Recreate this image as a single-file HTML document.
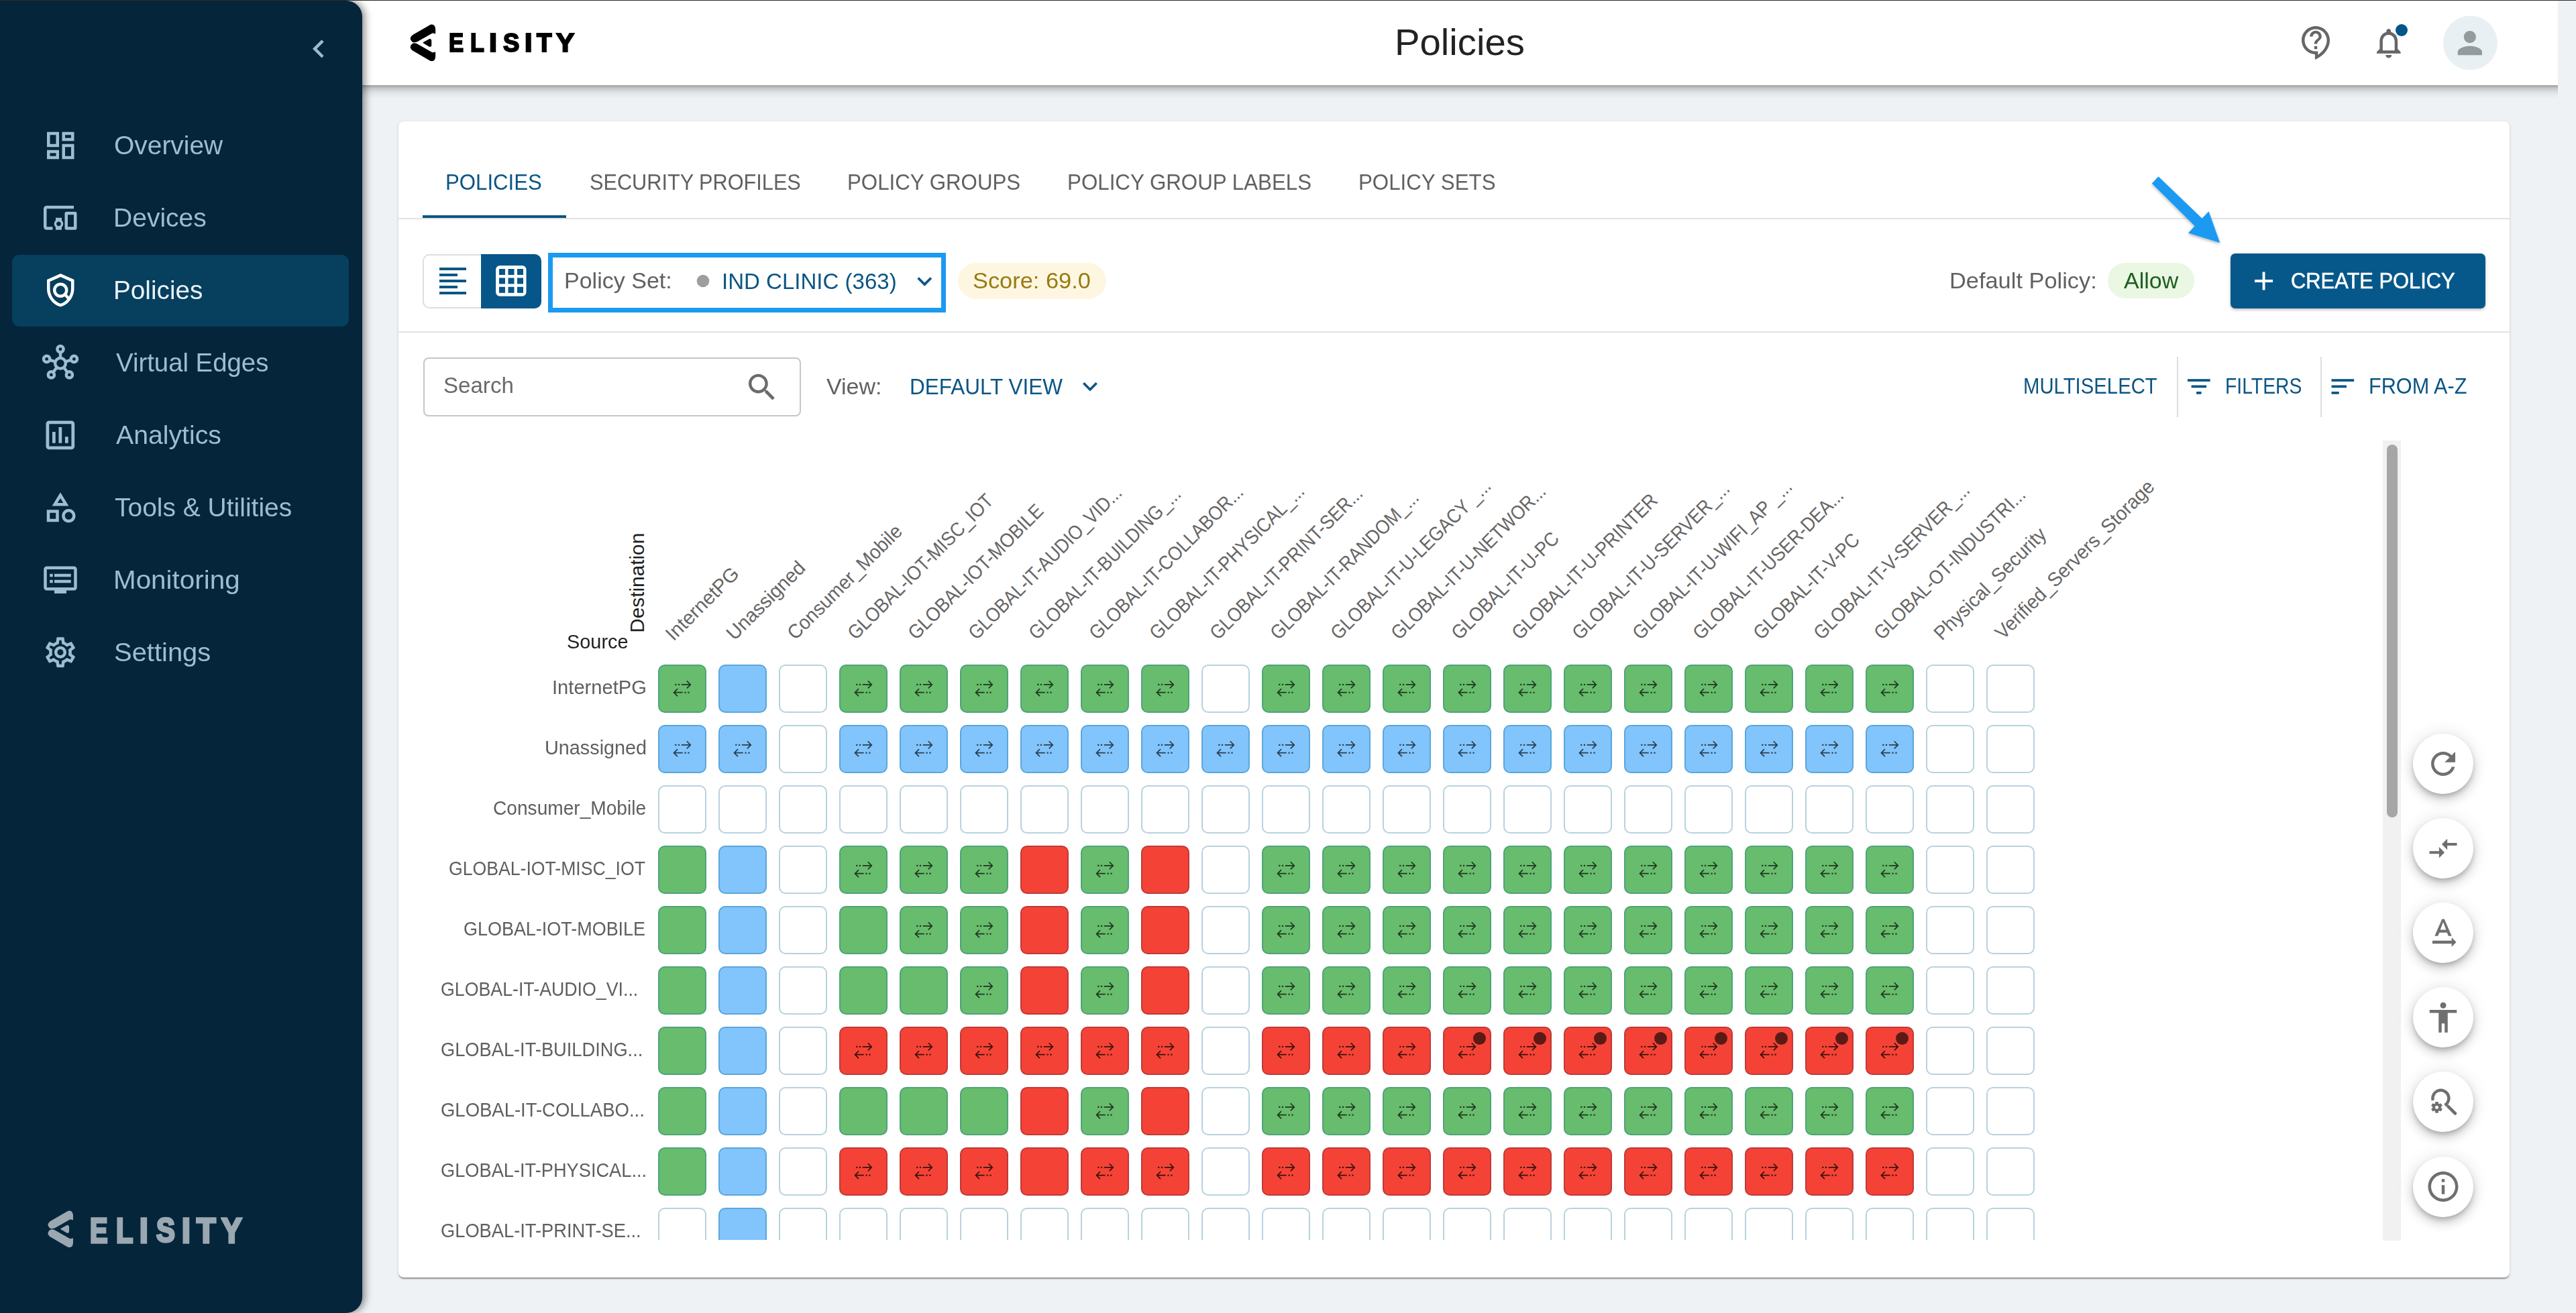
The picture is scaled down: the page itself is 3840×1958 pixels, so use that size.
<!DOCTYPE html>
<html><head><meta charset="utf-8"><title>Policies</title>
<style>
html,body{margin:0;padding:0;width:3840px;height:1958px;overflow:hidden;background:#eef2f5;font-family:"Liberation Sans",sans-serif;}
.a{position:absolute;box-sizing:border-box;}
.t{position:absolute;z-index:30;white-space:nowrap;transform-origin:0 0;font-family:"Liberation Sans",sans-serif;}
#topline{position:absolute;left:0;top:0;width:3840px;height:1px;background:#2a2a2a;z-index:50}
#sidebar{position:absolute;left:0;top:1px;width:540px;height:1957px;background:#05253a;border-radius:0 24px 24px 0;box-shadow:4px 0 12px rgba(0,0,0,0.45);z-index:10}
#sidebar .act{position:absolute;left:18px;top:379px;width:502px;height:107px;background:#073f5e;border-radius:11px}
#header{position:absolute;left:0px;top:1px;width:3813px;height:126px;background:#fff;z-index:5}
#hshadow{position:absolute;left:0px;top:127px;width:3813px;height:20px;background:linear-gradient(rgba(0,0,0,0.34),rgba(0,0,0,0.16) 25%,rgba(0,0,0,0.05) 60%,rgba(0,0,0,0));z-index:5}
#card{position:absolute;left:594px;top:181px;width:3147px;height:1723.5px;background:#fff;border-radius:8px;box-shadow:0 3px 1.5px -1.5px rgba(0,0,0,.2),0 1.5px 1.5px 0 rgba(0,0,0,.14),0 1.5px 4.5px 0 rgba(0,0,0,.12)}
.hl{position:absolute;height:2px;background:#e0e0e0}
.c{position:absolute;width:72px;height:72px;box-sizing:border-box;border-radius:10px;border:2px solid}
.cg{background:#68bc6d;border-color:#4da47a;color:rgba(0,0,0,0.7)}
.cb{background:#82c4fc;border-color:#5aa7dc;color:rgba(0,0,0,0.68)}
.cr{background:#f44336;border-color:#c0393a;color:rgba(0,0,0,0.75)}
.ce{background:#fff;border-color:#b8d2de}
.ar{position:absolute;left:-2px;top:-2px}
.dot{position:absolute;right:6px;top:6px;width:19px;height:19px;border-radius:50%;background:#5c1a17}
#matclip{position:absolute;left:600px;top:640px;width:2940px;height:1209px;overflow:hidden}
#matclip .inner{position:absolute;left:-600px;top:-640px;width:3840px;height:1958px}
.fab{position:absolute;width:90px;height:90px;border-radius:50%;background:#fff;box-shadow:0 4.5px 7.5px -1.5px rgba(0,0,0,.2),0 9px 15px 0 rgba(0,0,0,.14),0 1.5px 27px 0 rgba(0,0,0,.12)}
</style></head>
<body>
<div id="topline"></div>
<div id="sidebar"><div class="act"></div></div>
<div id="header"></div><div id="hshadow"></div>
<div id="card"></div>
<!-- card internals -->
<div class="hl" style="left:594px;top:325px;width:3147px;height:2px;background:#e2e2e2"></div>
<div class="a" style="left:630px;top:321px;width:214px;height:4px;background:#0b5584"></div>
<div class="hl" style="left:594px;top:494px;width:3147px;height:2px;background:#e2e2e2"></div>
<!-- toggle -->
<div class="a" style="left:630px;top:379px;width:100px;height:81px;border:2px solid #dedede;border-right:none;border-radius:10px 0 0 10px;background:#fff"></div>
<div class="a" style="left:717px;top:379px;width:90px;height:81px;background:#065689;border-radius:0 10px 10px 0"></div>
<!-- policy set annotation box -->
<div class="a" style="left:817px;top:377px;width:593px;height:88.5px;border:7.5px solid #1a9af1;background:#fff"></div>
<!-- pills -->
<div class="a" style="left:1428px;top:392px;width:221px;height:54px;border-radius:27px;background:#fdf7e2"></div>
<div class="a" style="left:3142px;top:392px;width:128.5px;height:53px;border-radius:27px;background:#e9f7e3"></div>
<!-- create button -->
<div class="a" style="left:3325px;top:378px;width:380px;height:82px;border-radius:7px;background:#07588a;box-shadow:0 2px 4px rgba(0,0,0,0.25)"></div>
<!-- search box -->
<div class="a" style="left:631px;top:533px;width:563px;height:88px;border:2px solid #c6c6c6;border-radius:8px"></div>
<!-- dividers -->
<div class="a" style="left:3245px;top:532px;width:2px;height:90px;background:#dddddd"></div>
<div class="a" style="left:3459px;top:532px;width:2px;height:90px;background:#dddddd"></div>
<!-- scrollbar -->
<div class="a" style="left:3552px;top:657px;width:27px;height:1193px;background:#f1f1f1"></div>
<div class="a" style="left:3558px;top:663px;width:16px;height:556px;background:#a6a6a6;border-radius:8px"></div>
<!-- FABs -->
<div class='fab' style='left:3597px;top:1094.0px'></div>
<div class='fab' style='left:3597px;top:1220.1px'></div>
<div class='fab' style='left:3597px;top:1346.2px'></div>
<div class='fab' style='left:3597px;top:1472.3px'></div>
<div class='fab' style='left:3597px;top:1598.4px'></div>
<div class='fab' style='left:3597px;top:1724.5px'></div>
<!-- matrix -->
<div id="matclip"><div class="inner">
<div class='c cg' style='left:981px;top:991px'><svg class=ar viewBox='0 0 72 72' width=72 height=72><g fill='none' stroke='currentColor' stroke-width='1.7'><path d='M34.8 29.9H48.3M42.8 24.4L48.3 29.9L42.8 35.4'/><path d='M23.5 41.7H36.7M29 36.2L23.5 41.7L29 47.2'/></g><g fill='currentColor'><rect x='25.2' y='28.8' width='2.2' height='2.2'/><rect x='29.9' y='28.8' width='2.2' height='2.2'/><rect x='39.5' y='40.6' width='2.2' height='2.2'/><rect x='44.4' y='40.6' width='2.2' height='2.2'/></g></svg></div>
<div class='c cb' style='left:1071px;top:991px'></div>
<div class='c ce' style='left:1161px;top:991px'></div>
<div class='c cg' style='left:1251px;top:991px'><svg class=ar viewBox='0 0 72 72' width=72 height=72><g fill='none' stroke='currentColor' stroke-width='1.7'><path d='M34.8 29.9H48.3M42.8 24.4L48.3 29.9L42.8 35.4'/><path d='M23.5 41.7H36.7M29 36.2L23.5 41.7L29 47.2'/></g><g fill='currentColor'><rect x='25.2' y='28.8' width='2.2' height='2.2'/><rect x='29.9' y='28.8' width='2.2' height='2.2'/><rect x='39.5' y='40.6' width='2.2' height='2.2'/><rect x='44.4' y='40.6' width='2.2' height='2.2'/></g></svg></div>
<div class='c cg' style='left:1341px;top:991px'><svg class=ar viewBox='0 0 72 72' width=72 height=72><g fill='none' stroke='currentColor' stroke-width='1.7'><path d='M34.8 29.9H48.3M42.8 24.4L48.3 29.9L42.8 35.4'/><path d='M23.5 41.7H36.7M29 36.2L23.5 41.7L29 47.2'/></g><g fill='currentColor'><rect x='25.2' y='28.8' width='2.2' height='2.2'/><rect x='29.9' y='28.8' width='2.2' height='2.2'/><rect x='39.5' y='40.6' width='2.2' height='2.2'/><rect x='44.4' y='40.6' width='2.2' height='2.2'/></g></svg></div>
<div class='c cg' style='left:1431px;top:991px'><svg class=ar viewBox='0 0 72 72' width=72 height=72><g fill='none' stroke='currentColor' stroke-width='1.7'><path d='M34.8 29.9H48.3M42.8 24.4L48.3 29.9L42.8 35.4'/><path d='M23.5 41.7H36.7M29 36.2L23.5 41.7L29 47.2'/></g><g fill='currentColor'><rect x='25.2' y='28.8' width='2.2' height='2.2'/><rect x='29.9' y='28.8' width='2.2' height='2.2'/><rect x='39.5' y='40.6' width='2.2' height='2.2'/><rect x='44.4' y='40.6' width='2.2' height='2.2'/></g></svg></div>
<div class='c cg' style='left:1521px;top:991px'><svg class=ar viewBox='0 0 72 72' width=72 height=72><g fill='none' stroke='currentColor' stroke-width='1.7'><path d='M34.8 29.9H48.3M42.8 24.4L48.3 29.9L42.8 35.4'/><path d='M23.5 41.7H36.7M29 36.2L23.5 41.7L29 47.2'/></g><g fill='currentColor'><rect x='25.2' y='28.8' width='2.2' height='2.2'/><rect x='29.9' y='28.8' width='2.2' height='2.2'/><rect x='39.5' y='40.6' width='2.2' height='2.2'/><rect x='44.4' y='40.6' width='2.2' height='2.2'/></g></svg></div>
<div class='c cg' style='left:1611px;top:991px'><svg class=ar viewBox='0 0 72 72' width=72 height=72><g fill='none' stroke='currentColor' stroke-width='1.7'><path d='M34.8 29.9H48.3M42.8 24.4L48.3 29.9L42.8 35.4'/><path d='M23.5 41.7H36.7M29 36.2L23.5 41.7L29 47.2'/></g><g fill='currentColor'><rect x='25.2' y='28.8' width='2.2' height='2.2'/><rect x='29.9' y='28.8' width='2.2' height='2.2'/><rect x='39.5' y='40.6' width='2.2' height='2.2'/><rect x='44.4' y='40.6' width='2.2' height='2.2'/></g></svg></div>
<div class='c cg' style='left:1701px;top:991px'><svg class=ar viewBox='0 0 72 72' width=72 height=72><g fill='none' stroke='currentColor' stroke-width='1.7'><path d='M34.8 29.9H48.3M42.8 24.4L48.3 29.9L42.8 35.4'/><path d='M23.5 41.7H36.7M29 36.2L23.5 41.7L29 47.2'/></g><g fill='currentColor'><rect x='25.2' y='28.8' width='2.2' height='2.2'/><rect x='29.9' y='28.8' width='2.2' height='2.2'/><rect x='39.5' y='40.6' width='2.2' height='2.2'/><rect x='44.4' y='40.6' width='2.2' height='2.2'/></g></svg></div>
<div class='c ce' style='left:1791px;top:991px'></div>
<div class='c cg' style='left:1881px;top:991px'><svg class=ar viewBox='0 0 72 72' width=72 height=72><g fill='none' stroke='currentColor' stroke-width='1.7'><path d='M34.8 29.9H48.3M42.8 24.4L48.3 29.9L42.8 35.4'/><path d='M23.5 41.7H36.7M29 36.2L23.5 41.7L29 47.2'/></g><g fill='currentColor'><rect x='25.2' y='28.8' width='2.2' height='2.2'/><rect x='29.9' y='28.8' width='2.2' height='2.2'/><rect x='39.5' y='40.6' width='2.2' height='2.2'/><rect x='44.4' y='40.6' width='2.2' height='2.2'/></g></svg></div>
<div class='c cg' style='left:1971px;top:991px'><svg class=ar viewBox='0 0 72 72' width=72 height=72><g fill='none' stroke='currentColor' stroke-width='1.7'><path d='M34.8 29.9H48.3M42.8 24.4L48.3 29.9L42.8 35.4'/><path d='M23.5 41.7H36.7M29 36.2L23.5 41.7L29 47.2'/></g><g fill='currentColor'><rect x='25.2' y='28.8' width='2.2' height='2.2'/><rect x='29.9' y='28.8' width='2.2' height='2.2'/><rect x='39.5' y='40.6' width='2.2' height='2.2'/><rect x='44.4' y='40.6' width='2.2' height='2.2'/></g></svg></div>
<div class='c cg' style='left:2061px;top:991px'><svg class=ar viewBox='0 0 72 72' width=72 height=72><g fill='none' stroke='currentColor' stroke-width='1.7'><path d='M34.8 29.9H48.3M42.8 24.4L48.3 29.9L42.8 35.4'/><path d='M23.5 41.7H36.7M29 36.2L23.5 41.7L29 47.2'/></g><g fill='currentColor'><rect x='25.2' y='28.8' width='2.2' height='2.2'/><rect x='29.9' y='28.8' width='2.2' height='2.2'/><rect x='39.5' y='40.6' width='2.2' height='2.2'/><rect x='44.4' y='40.6' width='2.2' height='2.2'/></g></svg></div>
<div class='c cg' style='left:2151px;top:991px'><svg class=ar viewBox='0 0 72 72' width=72 height=72><g fill='none' stroke='currentColor' stroke-width='1.7'><path d='M34.8 29.9H48.3M42.8 24.4L48.3 29.9L42.8 35.4'/><path d='M23.5 41.7H36.7M29 36.2L23.5 41.7L29 47.2'/></g><g fill='currentColor'><rect x='25.2' y='28.8' width='2.2' height='2.2'/><rect x='29.9' y='28.8' width='2.2' height='2.2'/><rect x='39.5' y='40.6' width='2.2' height='2.2'/><rect x='44.4' y='40.6' width='2.2' height='2.2'/></g></svg></div>
<div class='c cg' style='left:2241px;top:991px'><svg class=ar viewBox='0 0 72 72' width=72 height=72><g fill='none' stroke='currentColor' stroke-width='1.7'><path d='M34.8 29.9H48.3M42.8 24.4L48.3 29.9L42.8 35.4'/><path d='M23.5 41.7H36.7M29 36.2L23.5 41.7L29 47.2'/></g><g fill='currentColor'><rect x='25.2' y='28.8' width='2.2' height='2.2'/><rect x='29.9' y='28.8' width='2.2' height='2.2'/><rect x='39.5' y='40.6' width='2.2' height='2.2'/><rect x='44.4' y='40.6' width='2.2' height='2.2'/></g></svg></div>
<div class='c cg' style='left:2331px;top:991px'><svg class=ar viewBox='0 0 72 72' width=72 height=72><g fill='none' stroke='currentColor' stroke-width='1.7'><path d='M34.8 29.9H48.3M42.8 24.4L48.3 29.9L42.8 35.4'/><path d='M23.5 41.7H36.7M29 36.2L23.5 41.7L29 47.2'/></g><g fill='currentColor'><rect x='25.2' y='28.8' width='2.2' height='2.2'/><rect x='29.9' y='28.8' width='2.2' height='2.2'/><rect x='39.5' y='40.6' width='2.2' height='2.2'/><rect x='44.4' y='40.6' width='2.2' height='2.2'/></g></svg></div>
<div class='c cg' style='left:2421px;top:991px'><svg class=ar viewBox='0 0 72 72' width=72 height=72><g fill='none' stroke='currentColor' stroke-width='1.7'><path d='M34.8 29.9H48.3M42.8 24.4L48.3 29.9L42.8 35.4'/><path d='M23.5 41.7H36.7M29 36.2L23.5 41.7L29 47.2'/></g><g fill='currentColor'><rect x='25.2' y='28.8' width='2.2' height='2.2'/><rect x='29.9' y='28.8' width='2.2' height='2.2'/><rect x='39.5' y='40.6' width='2.2' height='2.2'/><rect x='44.4' y='40.6' width='2.2' height='2.2'/></g></svg></div>
<div class='c cg' style='left:2511px;top:991px'><svg class=ar viewBox='0 0 72 72' width=72 height=72><g fill='none' stroke='currentColor' stroke-width='1.7'><path d='M34.8 29.9H48.3M42.8 24.4L48.3 29.9L42.8 35.4'/><path d='M23.5 41.7H36.7M29 36.2L23.5 41.7L29 47.2'/></g><g fill='currentColor'><rect x='25.2' y='28.8' width='2.2' height='2.2'/><rect x='29.9' y='28.8' width='2.2' height='2.2'/><rect x='39.5' y='40.6' width='2.2' height='2.2'/><rect x='44.4' y='40.6' width='2.2' height='2.2'/></g></svg></div>
<div class='c cg' style='left:2601px;top:991px'><svg class=ar viewBox='0 0 72 72' width=72 height=72><g fill='none' stroke='currentColor' stroke-width='1.7'><path d='M34.8 29.9H48.3M42.8 24.4L48.3 29.9L42.8 35.4'/><path d='M23.5 41.7H36.7M29 36.2L23.5 41.7L29 47.2'/></g><g fill='currentColor'><rect x='25.2' y='28.8' width='2.2' height='2.2'/><rect x='29.9' y='28.8' width='2.2' height='2.2'/><rect x='39.5' y='40.6' width='2.2' height='2.2'/><rect x='44.4' y='40.6' width='2.2' height='2.2'/></g></svg></div>
<div class='c cg' style='left:2691px;top:991px'><svg class=ar viewBox='0 0 72 72' width=72 height=72><g fill='none' stroke='currentColor' stroke-width='1.7'><path d='M34.8 29.9H48.3M42.8 24.4L48.3 29.9L42.8 35.4'/><path d='M23.5 41.7H36.7M29 36.2L23.5 41.7L29 47.2'/></g><g fill='currentColor'><rect x='25.2' y='28.8' width='2.2' height='2.2'/><rect x='29.9' y='28.8' width='2.2' height='2.2'/><rect x='39.5' y='40.6' width='2.2' height='2.2'/><rect x='44.4' y='40.6' width='2.2' height='2.2'/></g></svg></div>
<div class='c cg' style='left:2781px;top:991px'><svg class=ar viewBox='0 0 72 72' width=72 height=72><g fill='none' stroke='currentColor' stroke-width='1.7'><path d='M34.8 29.9H48.3M42.8 24.4L48.3 29.9L42.8 35.4'/><path d='M23.5 41.7H36.7M29 36.2L23.5 41.7L29 47.2'/></g><g fill='currentColor'><rect x='25.2' y='28.8' width='2.2' height='2.2'/><rect x='29.9' y='28.8' width='2.2' height='2.2'/><rect x='39.5' y='40.6' width='2.2' height='2.2'/><rect x='44.4' y='40.6' width='2.2' height='2.2'/></g></svg></div>
<div class='c ce' style='left:2871px;top:991px'></div>
<div class='c ce' style='left:2961px;top:991px'></div>
<div class='c cb' style='left:981px;top:1081px'><svg class=ar viewBox='0 0 72 72' width=72 height=72><g fill='none' stroke='currentColor' stroke-width='1.7'><path d='M34.8 29.9H48.3M42.8 24.4L48.3 29.9L42.8 35.4'/><path d='M23.5 41.7H36.7M29 36.2L23.5 41.7L29 47.2'/></g><g fill='currentColor'><rect x='25.2' y='28.8' width='2.2' height='2.2'/><rect x='29.9' y='28.8' width='2.2' height='2.2'/><rect x='39.5' y='40.6' width='2.2' height='2.2'/><rect x='44.4' y='40.6' width='2.2' height='2.2'/></g></svg></div>
<div class='c cb' style='left:1071px;top:1081px'><svg class=ar viewBox='0 0 72 72' width=72 height=72><g fill='none' stroke='currentColor' stroke-width='1.7'><path d='M34.8 29.9H48.3M42.8 24.4L48.3 29.9L42.8 35.4'/><path d='M23.5 41.7H36.7M29 36.2L23.5 41.7L29 47.2'/></g><g fill='currentColor'><rect x='25.2' y='28.8' width='2.2' height='2.2'/><rect x='29.9' y='28.8' width='2.2' height='2.2'/><rect x='39.5' y='40.6' width='2.2' height='2.2'/><rect x='44.4' y='40.6' width='2.2' height='2.2'/></g></svg></div>
<div class='c ce' style='left:1161px;top:1081px'></div>
<div class='c cb' style='left:1251px;top:1081px'><svg class=ar viewBox='0 0 72 72' width=72 height=72><g fill='none' stroke='currentColor' stroke-width='1.7'><path d='M34.8 29.9H48.3M42.8 24.4L48.3 29.9L42.8 35.4'/><path d='M23.5 41.7H36.7M29 36.2L23.5 41.7L29 47.2'/></g><g fill='currentColor'><rect x='25.2' y='28.8' width='2.2' height='2.2'/><rect x='29.9' y='28.8' width='2.2' height='2.2'/><rect x='39.5' y='40.6' width='2.2' height='2.2'/><rect x='44.4' y='40.6' width='2.2' height='2.2'/></g></svg></div>
<div class='c cb' style='left:1341px;top:1081px'><svg class=ar viewBox='0 0 72 72' width=72 height=72><g fill='none' stroke='currentColor' stroke-width='1.7'><path d='M34.8 29.9H48.3M42.8 24.4L48.3 29.9L42.8 35.4'/><path d='M23.5 41.7H36.7M29 36.2L23.5 41.7L29 47.2'/></g><g fill='currentColor'><rect x='25.2' y='28.8' width='2.2' height='2.2'/><rect x='29.9' y='28.8' width='2.2' height='2.2'/><rect x='39.5' y='40.6' width='2.2' height='2.2'/><rect x='44.4' y='40.6' width='2.2' height='2.2'/></g></svg></div>
<div class='c cb' style='left:1431px;top:1081px'><svg class=ar viewBox='0 0 72 72' width=72 height=72><g fill='none' stroke='currentColor' stroke-width='1.7'><path d='M34.8 29.9H48.3M42.8 24.4L48.3 29.9L42.8 35.4'/><path d='M23.5 41.7H36.7M29 36.2L23.5 41.7L29 47.2'/></g><g fill='currentColor'><rect x='25.2' y='28.8' width='2.2' height='2.2'/><rect x='29.9' y='28.8' width='2.2' height='2.2'/><rect x='39.5' y='40.6' width='2.2' height='2.2'/><rect x='44.4' y='40.6' width='2.2' height='2.2'/></g></svg></div>
<div class='c cb' style='left:1521px;top:1081px'><svg class=ar viewBox='0 0 72 72' width=72 height=72><g fill='none' stroke='currentColor' stroke-width='1.7'><path d='M34.8 29.9H48.3M42.8 24.4L48.3 29.9L42.8 35.4'/><path d='M23.5 41.7H36.7M29 36.2L23.5 41.7L29 47.2'/></g><g fill='currentColor'><rect x='25.2' y='28.8' width='2.2' height='2.2'/><rect x='29.9' y='28.8' width='2.2' height='2.2'/><rect x='39.5' y='40.6' width='2.2' height='2.2'/><rect x='44.4' y='40.6' width='2.2' height='2.2'/></g></svg></div>
<div class='c cb' style='left:1611px;top:1081px'><svg class=ar viewBox='0 0 72 72' width=72 height=72><g fill='none' stroke='currentColor' stroke-width='1.7'><path d='M34.8 29.9H48.3M42.8 24.4L48.3 29.9L42.8 35.4'/><path d='M23.5 41.7H36.7M29 36.2L23.5 41.7L29 47.2'/></g><g fill='currentColor'><rect x='25.2' y='28.8' width='2.2' height='2.2'/><rect x='29.9' y='28.8' width='2.2' height='2.2'/><rect x='39.5' y='40.6' width='2.2' height='2.2'/><rect x='44.4' y='40.6' width='2.2' height='2.2'/></g></svg></div>
<div class='c cb' style='left:1701px;top:1081px'><svg class=ar viewBox='0 0 72 72' width=72 height=72><g fill='none' stroke='currentColor' stroke-width='1.7'><path d='M34.8 29.9H48.3M42.8 24.4L48.3 29.9L42.8 35.4'/><path d='M23.5 41.7H36.7M29 36.2L23.5 41.7L29 47.2'/></g><g fill='currentColor'><rect x='25.2' y='28.8' width='2.2' height='2.2'/><rect x='29.9' y='28.8' width='2.2' height='2.2'/><rect x='39.5' y='40.6' width='2.2' height='2.2'/><rect x='44.4' y='40.6' width='2.2' height='2.2'/></g></svg></div>
<div class='c cb' style='left:1791px;top:1081px'><svg class=ar viewBox='0 0 72 72' width=72 height=72><g fill='none' stroke='currentColor' stroke-width='1.7'><path d='M34.8 29.9H48.3M42.8 24.4L48.3 29.9L42.8 35.4'/><path d='M23.5 41.7H36.7M29 36.2L23.5 41.7L29 47.2'/></g><g fill='currentColor'><rect x='25.2' y='28.8' width='2.2' height='2.2'/><rect x='29.9' y='28.8' width='2.2' height='2.2'/><rect x='39.5' y='40.6' width='2.2' height='2.2'/><rect x='44.4' y='40.6' width='2.2' height='2.2'/></g></svg></div>
<div class='c cb' style='left:1881px;top:1081px'><svg class=ar viewBox='0 0 72 72' width=72 height=72><g fill='none' stroke='currentColor' stroke-width='1.7'><path d='M34.8 29.9H48.3M42.8 24.4L48.3 29.9L42.8 35.4'/><path d='M23.5 41.7H36.7M29 36.2L23.5 41.7L29 47.2'/></g><g fill='currentColor'><rect x='25.2' y='28.8' width='2.2' height='2.2'/><rect x='29.9' y='28.8' width='2.2' height='2.2'/><rect x='39.5' y='40.6' width='2.2' height='2.2'/><rect x='44.4' y='40.6' width='2.2' height='2.2'/></g></svg></div>
<div class='c cb' style='left:1971px;top:1081px'><svg class=ar viewBox='0 0 72 72' width=72 height=72><g fill='none' stroke='currentColor' stroke-width='1.7'><path d='M34.8 29.9H48.3M42.8 24.4L48.3 29.9L42.8 35.4'/><path d='M23.5 41.7H36.7M29 36.2L23.5 41.7L29 47.2'/></g><g fill='currentColor'><rect x='25.2' y='28.8' width='2.2' height='2.2'/><rect x='29.9' y='28.8' width='2.2' height='2.2'/><rect x='39.5' y='40.6' width='2.2' height='2.2'/><rect x='44.4' y='40.6' width='2.2' height='2.2'/></g></svg></div>
<div class='c cb' style='left:2061px;top:1081px'><svg class=ar viewBox='0 0 72 72' width=72 height=72><g fill='none' stroke='currentColor' stroke-width='1.7'><path d='M34.8 29.9H48.3M42.8 24.4L48.3 29.9L42.8 35.4'/><path d='M23.5 41.7H36.7M29 36.2L23.5 41.7L29 47.2'/></g><g fill='currentColor'><rect x='25.2' y='28.8' width='2.2' height='2.2'/><rect x='29.9' y='28.8' width='2.2' height='2.2'/><rect x='39.5' y='40.6' width='2.2' height='2.2'/><rect x='44.4' y='40.6' width='2.2' height='2.2'/></g></svg></div>
<div class='c cb' style='left:2151px;top:1081px'><svg class=ar viewBox='0 0 72 72' width=72 height=72><g fill='none' stroke='currentColor' stroke-width='1.7'><path d='M34.8 29.9H48.3M42.8 24.4L48.3 29.9L42.8 35.4'/><path d='M23.5 41.7H36.7M29 36.2L23.5 41.7L29 47.2'/></g><g fill='currentColor'><rect x='25.2' y='28.8' width='2.2' height='2.2'/><rect x='29.9' y='28.8' width='2.2' height='2.2'/><rect x='39.5' y='40.6' width='2.2' height='2.2'/><rect x='44.4' y='40.6' width='2.2' height='2.2'/></g></svg></div>
<div class='c cb' style='left:2241px;top:1081px'><svg class=ar viewBox='0 0 72 72' width=72 height=72><g fill='none' stroke='currentColor' stroke-width='1.7'><path d='M34.8 29.9H48.3M42.8 24.4L48.3 29.9L42.8 35.4'/><path d='M23.5 41.7H36.7M29 36.2L23.5 41.7L29 47.2'/></g><g fill='currentColor'><rect x='25.2' y='28.8' width='2.2' height='2.2'/><rect x='29.9' y='28.8' width='2.2' height='2.2'/><rect x='39.5' y='40.6' width='2.2' height='2.2'/><rect x='44.4' y='40.6' width='2.2' height='2.2'/></g></svg></div>
<div class='c cb' style='left:2331px;top:1081px'><svg class=ar viewBox='0 0 72 72' width=72 height=72><g fill='none' stroke='currentColor' stroke-width='1.7'><path d='M34.8 29.9H48.3M42.8 24.4L48.3 29.9L42.8 35.4'/><path d='M23.5 41.7H36.7M29 36.2L23.5 41.7L29 47.2'/></g><g fill='currentColor'><rect x='25.2' y='28.8' width='2.2' height='2.2'/><rect x='29.9' y='28.8' width='2.2' height='2.2'/><rect x='39.5' y='40.6' width='2.2' height='2.2'/><rect x='44.4' y='40.6' width='2.2' height='2.2'/></g></svg></div>
<div class='c cb' style='left:2421px;top:1081px'><svg class=ar viewBox='0 0 72 72' width=72 height=72><g fill='none' stroke='currentColor' stroke-width='1.7'><path d='M34.8 29.9H48.3M42.8 24.4L48.3 29.9L42.8 35.4'/><path d='M23.5 41.7H36.7M29 36.2L23.5 41.7L29 47.2'/></g><g fill='currentColor'><rect x='25.2' y='28.8' width='2.2' height='2.2'/><rect x='29.9' y='28.8' width='2.2' height='2.2'/><rect x='39.5' y='40.6' width='2.2' height='2.2'/><rect x='44.4' y='40.6' width='2.2' height='2.2'/></g></svg></div>
<div class='c cb' style='left:2511px;top:1081px'><svg class=ar viewBox='0 0 72 72' width=72 height=72><g fill='none' stroke='currentColor' stroke-width='1.7'><path d='M34.8 29.9H48.3M42.8 24.4L48.3 29.9L42.8 35.4'/><path d='M23.5 41.7H36.7M29 36.2L23.5 41.7L29 47.2'/></g><g fill='currentColor'><rect x='25.2' y='28.8' width='2.2' height='2.2'/><rect x='29.9' y='28.8' width='2.2' height='2.2'/><rect x='39.5' y='40.6' width='2.2' height='2.2'/><rect x='44.4' y='40.6' width='2.2' height='2.2'/></g></svg></div>
<div class='c cb' style='left:2601px;top:1081px'><svg class=ar viewBox='0 0 72 72' width=72 height=72><g fill='none' stroke='currentColor' stroke-width='1.7'><path d='M34.8 29.9H48.3M42.8 24.4L48.3 29.9L42.8 35.4'/><path d='M23.5 41.7H36.7M29 36.2L23.5 41.7L29 47.2'/></g><g fill='currentColor'><rect x='25.2' y='28.8' width='2.2' height='2.2'/><rect x='29.9' y='28.8' width='2.2' height='2.2'/><rect x='39.5' y='40.6' width='2.2' height='2.2'/><rect x='44.4' y='40.6' width='2.2' height='2.2'/></g></svg></div>
<div class='c cb' style='left:2691px;top:1081px'><svg class=ar viewBox='0 0 72 72' width=72 height=72><g fill='none' stroke='currentColor' stroke-width='1.7'><path d='M34.8 29.9H48.3M42.8 24.4L48.3 29.9L42.8 35.4'/><path d='M23.5 41.7H36.7M29 36.2L23.5 41.7L29 47.2'/></g><g fill='currentColor'><rect x='25.2' y='28.8' width='2.2' height='2.2'/><rect x='29.9' y='28.8' width='2.2' height='2.2'/><rect x='39.5' y='40.6' width='2.2' height='2.2'/><rect x='44.4' y='40.6' width='2.2' height='2.2'/></g></svg></div>
<div class='c cb' style='left:2781px;top:1081px'><svg class=ar viewBox='0 0 72 72' width=72 height=72><g fill='none' stroke='currentColor' stroke-width='1.7'><path d='M34.8 29.9H48.3M42.8 24.4L48.3 29.9L42.8 35.4'/><path d='M23.5 41.7H36.7M29 36.2L23.5 41.7L29 47.2'/></g><g fill='currentColor'><rect x='25.2' y='28.8' width='2.2' height='2.2'/><rect x='29.9' y='28.8' width='2.2' height='2.2'/><rect x='39.5' y='40.6' width='2.2' height='2.2'/><rect x='44.4' y='40.6' width='2.2' height='2.2'/></g></svg></div>
<div class='c ce' style='left:2871px;top:1081px'></div>
<div class='c ce' style='left:2961px;top:1081px'></div>
<div class='c ce' style='left:981px;top:1171px'></div>
<div class='c ce' style='left:1071px;top:1171px'></div>
<div class='c ce' style='left:1161px;top:1171px'></div>
<div class='c ce' style='left:1251px;top:1171px'></div>
<div class='c ce' style='left:1341px;top:1171px'></div>
<div class='c ce' style='left:1431px;top:1171px'></div>
<div class='c ce' style='left:1521px;top:1171px'></div>
<div class='c ce' style='left:1611px;top:1171px'></div>
<div class='c ce' style='left:1701px;top:1171px'></div>
<div class='c ce' style='left:1791px;top:1171px'></div>
<div class='c ce' style='left:1881px;top:1171px'></div>
<div class='c ce' style='left:1971px;top:1171px'></div>
<div class='c ce' style='left:2061px;top:1171px'></div>
<div class='c ce' style='left:2151px;top:1171px'></div>
<div class='c ce' style='left:2241px;top:1171px'></div>
<div class='c ce' style='left:2331px;top:1171px'></div>
<div class='c ce' style='left:2421px;top:1171px'></div>
<div class='c ce' style='left:2511px;top:1171px'></div>
<div class='c ce' style='left:2601px;top:1171px'></div>
<div class='c ce' style='left:2691px;top:1171px'></div>
<div class='c ce' style='left:2781px;top:1171px'></div>
<div class='c ce' style='left:2871px;top:1171px'></div>
<div class='c ce' style='left:2961px;top:1171px'></div>
<div class='c cg' style='left:981px;top:1261px'></div>
<div class='c cb' style='left:1071px;top:1261px'></div>
<div class='c ce' style='left:1161px;top:1261px'></div>
<div class='c cg' style='left:1251px;top:1261px'><svg class=ar viewBox='0 0 72 72' width=72 height=72><g fill='none' stroke='currentColor' stroke-width='1.7'><path d='M34.8 29.9H48.3M42.8 24.4L48.3 29.9L42.8 35.4'/><path d='M23.5 41.7H36.7M29 36.2L23.5 41.7L29 47.2'/></g><g fill='currentColor'><rect x='25.2' y='28.8' width='2.2' height='2.2'/><rect x='29.9' y='28.8' width='2.2' height='2.2'/><rect x='39.5' y='40.6' width='2.2' height='2.2'/><rect x='44.4' y='40.6' width='2.2' height='2.2'/></g></svg></div>
<div class='c cg' style='left:1341px;top:1261px'><svg class=ar viewBox='0 0 72 72' width=72 height=72><g fill='none' stroke='currentColor' stroke-width='1.7'><path d='M34.8 29.9H48.3M42.8 24.4L48.3 29.9L42.8 35.4'/><path d='M23.5 41.7H36.7M29 36.2L23.5 41.7L29 47.2'/></g><g fill='currentColor'><rect x='25.2' y='28.8' width='2.2' height='2.2'/><rect x='29.9' y='28.8' width='2.2' height='2.2'/><rect x='39.5' y='40.6' width='2.2' height='2.2'/><rect x='44.4' y='40.6' width='2.2' height='2.2'/></g></svg></div>
<div class='c cg' style='left:1431px;top:1261px'><svg class=ar viewBox='0 0 72 72' width=72 height=72><g fill='none' stroke='currentColor' stroke-width='1.7'><path d='M34.8 29.9H48.3M42.8 24.4L48.3 29.9L42.8 35.4'/><path d='M23.5 41.7H36.7M29 36.2L23.5 41.7L29 47.2'/></g><g fill='currentColor'><rect x='25.2' y='28.8' width='2.2' height='2.2'/><rect x='29.9' y='28.8' width='2.2' height='2.2'/><rect x='39.5' y='40.6' width='2.2' height='2.2'/><rect x='44.4' y='40.6' width='2.2' height='2.2'/></g></svg></div>
<div class='c cr' style='left:1521px;top:1261px'></div>
<div class='c cg' style='left:1611px;top:1261px'><svg class=ar viewBox='0 0 72 72' width=72 height=72><g fill='none' stroke='currentColor' stroke-width='1.7'><path d='M34.8 29.9H48.3M42.8 24.4L48.3 29.9L42.8 35.4'/><path d='M23.5 41.7H36.7M29 36.2L23.5 41.7L29 47.2'/></g><g fill='currentColor'><rect x='25.2' y='28.8' width='2.2' height='2.2'/><rect x='29.9' y='28.8' width='2.2' height='2.2'/><rect x='39.5' y='40.6' width='2.2' height='2.2'/><rect x='44.4' y='40.6' width='2.2' height='2.2'/></g></svg></div>
<div class='c cr' style='left:1701px;top:1261px'></div>
<div class='c ce' style='left:1791px;top:1261px'></div>
<div class='c cg' style='left:1881px;top:1261px'><svg class=ar viewBox='0 0 72 72' width=72 height=72><g fill='none' stroke='currentColor' stroke-width='1.7'><path d='M34.8 29.9H48.3M42.8 24.4L48.3 29.9L42.8 35.4'/><path d='M23.5 41.7H36.7M29 36.2L23.5 41.7L29 47.2'/></g><g fill='currentColor'><rect x='25.2' y='28.8' width='2.2' height='2.2'/><rect x='29.9' y='28.8' width='2.2' height='2.2'/><rect x='39.5' y='40.6' width='2.2' height='2.2'/><rect x='44.4' y='40.6' width='2.2' height='2.2'/></g></svg></div>
<div class='c cg' style='left:1971px;top:1261px'><svg class=ar viewBox='0 0 72 72' width=72 height=72><g fill='none' stroke='currentColor' stroke-width='1.7'><path d='M34.8 29.9H48.3M42.8 24.4L48.3 29.9L42.8 35.4'/><path d='M23.5 41.7H36.7M29 36.2L23.5 41.7L29 47.2'/></g><g fill='currentColor'><rect x='25.2' y='28.8' width='2.2' height='2.2'/><rect x='29.9' y='28.8' width='2.2' height='2.2'/><rect x='39.5' y='40.6' width='2.2' height='2.2'/><rect x='44.4' y='40.6' width='2.2' height='2.2'/></g></svg></div>
<div class='c cg' style='left:2061px;top:1261px'><svg class=ar viewBox='0 0 72 72' width=72 height=72><g fill='none' stroke='currentColor' stroke-width='1.7'><path d='M34.8 29.9H48.3M42.8 24.4L48.3 29.9L42.8 35.4'/><path d='M23.5 41.7H36.7M29 36.2L23.5 41.7L29 47.2'/></g><g fill='currentColor'><rect x='25.2' y='28.8' width='2.2' height='2.2'/><rect x='29.9' y='28.8' width='2.2' height='2.2'/><rect x='39.5' y='40.6' width='2.2' height='2.2'/><rect x='44.4' y='40.6' width='2.2' height='2.2'/></g></svg></div>
<div class='c cg' style='left:2151px;top:1261px'><svg class=ar viewBox='0 0 72 72' width=72 height=72><g fill='none' stroke='currentColor' stroke-width='1.7'><path d='M34.8 29.9H48.3M42.8 24.4L48.3 29.9L42.8 35.4'/><path d='M23.5 41.7H36.7M29 36.2L23.5 41.7L29 47.2'/></g><g fill='currentColor'><rect x='25.2' y='28.8' width='2.2' height='2.2'/><rect x='29.9' y='28.8' width='2.2' height='2.2'/><rect x='39.5' y='40.6' width='2.2' height='2.2'/><rect x='44.4' y='40.6' width='2.2' height='2.2'/></g></svg></div>
<div class='c cg' style='left:2241px;top:1261px'><svg class=ar viewBox='0 0 72 72' width=72 height=72><g fill='none' stroke='currentColor' stroke-width='1.7'><path d='M34.8 29.9H48.3M42.8 24.4L48.3 29.9L42.8 35.4'/><path d='M23.5 41.7H36.7M29 36.2L23.5 41.7L29 47.2'/></g><g fill='currentColor'><rect x='25.2' y='28.8' width='2.2' height='2.2'/><rect x='29.9' y='28.8' width='2.2' height='2.2'/><rect x='39.5' y='40.6' width='2.2' height='2.2'/><rect x='44.4' y='40.6' width='2.2' height='2.2'/></g></svg></div>
<div class='c cg' style='left:2331px;top:1261px'><svg class=ar viewBox='0 0 72 72' width=72 height=72><g fill='none' stroke='currentColor' stroke-width='1.7'><path d='M34.8 29.9H48.3M42.8 24.4L48.3 29.9L42.8 35.4'/><path d='M23.5 41.7H36.7M29 36.2L23.5 41.7L29 47.2'/></g><g fill='currentColor'><rect x='25.2' y='28.8' width='2.2' height='2.2'/><rect x='29.9' y='28.8' width='2.2' height='2.2'/><rect x='39.5' y='40.6' width='2.2' height='2.2'/><rect x='44.4' y='40.6' width='2.2' height='2.2'/></g></svg></div>
<div class='c cg' style='left:2421px;top:1261px'><svg class=ar viewBox='0 0 72 72' width=72 height=72><g fill='none' stroke='currentColor' stroke-width='1.7'><path d='M34.8 29.9H48.3M42.8 24.4L48.3 29.9L42.8 35.4'/><path d='M23.5 41.7H36.7M29 36.2L23.5 41.7L29 47.2'/></g><g fill='currentColor'><rect x='25.2' y='28.8' width='2.2' height='2.2'/><rect x='29.9' y='28.8' width='2.2' height='2.2'/><rect x='39.5' y='40.6' width='2.2' height='2.2'/><rect x='44.4' y='40.6' width='2.2' height='2.2'/></g></svg></div>
<div class='c cg' style='left:2511px;top:1261px'><svg class=ar viewBox='0 0 72 72' width=72 height=72><g fill='none' stroke='currentColor' stroke-width='1.7'><path d='M34.8 29.9H48.3M42.8 24.4L48.3 29.9L42.8 35.4'/><path d='M23.5 41.7H36.7M29 36.2L23.5 41.7L29 47.2'/></g><g fill='currentColor'><rect x='25.2' y='28.8' width='2.2' height='2.2'/><rect x='29.9' y='28.8' width='2.2' height='2.2'/><rect x='39.5' y='40.6' width='2.2' height='2.2'/><rect x='44.4' y='40.6' width='2.2' height='2.2'/></g></svg></div>
<div class='c cg' style='left:2601px;top:1261px'><svg class=ar viewBox='0 0 72 72' width=72 height=72><g fill='none' stroke='currentColor' stroke-width='1.7'><path d='M34.8 29.9H48.3M42.8 24.4L48.3 29.9L42.8 35.4'/><path d='M23.5 41.7H36.7M29 36.2L23.5 41.7L29 47.2'/></g><g fill='currentColor'><rect x='25.2' y='28.8' width='2.2' height='2.2'/><rect x='29.9' y='28.8' width='2.2' height='2.2'/><rect x='39.5' y='40.6' width='2.2' height='2.2'/><rect x='44.4' y='40.6' width='2.2' height='2.2'/></g></svg></div>
<div class='c cg' style='left:2691px;top:1261px'><svg class=ar viewBox='0 0 72 72' width=72 height=72><g fill='none' stroke='currentColor' stroke-width='1.7'><path d='M34.8 29.9H48.3M42.8 24.4L48.3 29.9L42.8 35.4'/><path d='M23.5 41.7H36.7M29 36.2L23.5 41.7L29 47.2'/></g><g fill='currentColor'><rect x='25.2' y='28.8' width='2.2' height='2.2'/><rect x='29.9' y='28.8' width='2.2' height='2.2'/><rect x='39.5' y='40.6' width='2.2' height='2.2'/><rect x='44.4' y='40.6' width='2.2' height='2.2'/></g></svg></div>
<div class='c cg' style='left:2781px;top:1261px'><svg class=ar viewBox='0 0 72 72' width=72 height=72><g fill='none' stroke='currentColor' stroke-width='1.7'><path d='M34.8 29.9H48.3M42.8 24.4L48.3 29.9L42.8 35.4'/><path d='M23.5 41.7H36.7M29 36.2L23.5 41.7L29 47.2'/></g><g fill='currentColor'><rect x='25.2' y='28.8' width='2.2' height='2.2'/><rect x='29.9' y='28.8' width='2.2' height='2.2'/><rect x='39.5' y='40.6' width='2.2' height='2.2'/><rect x='44.4' y='40.6' width='2.2' height='2.2'/></g></svg></div>
<div class='c ce' style='left:2871px;top:1261px'></div>
<div class='c ce' style='left:2961px;top:1261px'></div>
<div class='c cg' style='left:981px;top:1351px'></div>
<div class='c cb' style='left:1071px;top:1351px'></div>
<div class='c ce' style='left:1161px;top:1351px'></div>
<div class='c cg' style='left:1251px;top:1351px'></div>
<div class='c cg' style='left:1341px;top:1351px'><svg class=ar viewBox='0 0 72 72' width=72 height=72><g fill='none' stroke='currentColor' stroke-width='1.7'><path d='M34.8 29.9H48.3M42.8 24.4L48.3 29.9L42.8 35.4'/><path d='M23.5 41.7H36.7M29 36.2L23.5 41.7L29 47.2'/></g><g fill='currentColor'><rect x='25.2' y='28.8' width='2.2' height='2.2'/><rect x='29.9' y='28.8' width='2.2' height='2.2'/><rect x='39.5' y='40.6' width='2.2' height='2.2'/><rect x='44.4' y='40.6' width='2.2' height='2.2'/></g></svg></div>
<div class='c cg' style='left:1431px;top:1351px'><svg class=ar viewBox='0 0 72 72' width=72 height=72><g fill='none' stroke='currentColor' stroke-width='1.7'><path d='M34.8 29.9H48.3M42.8 24.4L48.3 29.9L42.8 35.4'/><path d='M23.5 41.7H36.7M29 36.2L23.5 41.7L29 47.2'/></g><g fill='currentColor'><rect x='25.2' y='28.8' width='2.2' height='2.2'/><rect x='29.9' y='28.8' width='2.2' height='2.2'/><rect x='39.5' y='40.6' width='2.2' height='2.2'/><rect x='44.4' y='40.6' width='2.2' height='2.2'/></g></svg></div>
<div class='c cr' style='left:1521px;top:1351px'></div>
<div class='c cg' style='left:1611px;top:1351px'><svg class=ar viewBox='0 0 72 72' width=72 height=72><g fill='none' stroke='currentColor' stroke-width='1.7'><path d='M34.8 29.9H48.3M42.8 24.4L48.3 29.9L42.8 35.4'/><path d='M23.5 41.7H36.7M29 36.2L23.5 41.7L29 47.2'/></g><g fill='currentColor'><rect x='25.2' y='28.8' width='2.2' height='2.2'/><rect x='29.9' y='28.8' width='2.2' height='2.2'/><rect x='39.5' y='40.6' width='2.2' height='2.2'/><rect x='44.4' y='40.6' width='2.2' height='2.2'/></g></svg></div>
<div class='c cr' style='left:1701px;top:1351px'></div>
<div class='c ce' style='left:1791px;top:1351px'></div>
<div class='c cg' style='left:1881px;top:1351px'><svg class=ar viewBox='0 0 72 72' width=72 height=72><g fill='none' stroke='currentColor' stroke-width='1.7'><path d='M34.8 29.9H48.3M42.8 24.4L48.3 29.9L42.8 35.4'/><path d='M23.5 41.7H36.7M29 36.2L23.5 41.7L29 47.2'/></g><g fill='currentColor'><rect x='25.2' y='28.8' width='2.2' height='2.2'/><rect x='29.9' y='28.8' width='2.2' height='2.2'/><rect x='39.5' y='40.6' width='2.2' height='2.2'/><rect x='44.4' y='40.6' width='2.2' height='2.2'/></g></svg></div>
<div class='c cg' style='left:1971px;top:1351px'><svg class=ar viewBox='0 0 72 72' width=72 height=72><g fill='none' stroke='currentColor' stroke-width='1.7'><path d='M34.8 29.9H48.3M42.8 24.4L48.3 29.9L42.8 35.4'/><path d='M23.5 41.7H36.7M29 36.2L23.5 41.7L29 47.2'/></g><g fill='currentColor'><rect x='25.2' y='28.8' width='2.2' height='2.2'/><rect x='29.9' y='28.8' width='2.2' height='2.2'/><rect x='39.5' y='40.6' width='2.2' height='2.2'/><rect x='44.4' y='40.6' width='2.2' height='2.2'/></g></svg></div>
<div class='c cg' style='left:2061px;top:1351px'><svg class=ar viewBox='0 0 72 72' width=72 height=72><g fill='none' stroke='currentColor' stroke-width='1.7'><path d='M34.8 29.9H48.3M42.8 24.4L48.3 29.9L42.8 35.4'/><path d='M23.5 41.7H36.7M29 36.2L23.5 41.7L29 47.2'/></g><g fill='currentColor'><rect x='25.2' y='28.8' width='2.2' height='2.2'/><rect x='29.9' y='28.8' width='2.2' height='2.2'/><rect x='39.5' y='40.6' width='2.2' height='2.2'/><rect x='44.4' y='40.6' width='2.2' height='2.2'/></g></svg></div>
<div class='c cg' style='left:2151px;top:1351px'><svg class=ar viewBox='0 0 72 72' width=72 height=72><g fill='none' stroke='currentColor' stroke-width='1.7'><path d='M34.8 29.9H48.3M42.8 24.4L48.3 29.9L42.8 35.4'/><path d='M23.5 41.7H36.7M29 36.2L23.5 41.7L29 47.2'/></g><g fill='currentColor'><rect x='25.2' y='28.8' width='2.2' height='2.2'/><rect x='29.9' y='28.8' width='2.2' height='2.2'/><rect x='39.5' y='40.6' width='2.2' height='2.2'/><rect x='44.4' y='40.6' width='2.2' height='2.2'/></g></svg></div>
<div class='c cg' style='left:2241px;top:1351px'><svg class=ar viewBox='0 0 72 72' width=72 height=72><g fill='none' stroke='currentColor' stroke-width='1.7'><path d='M34.8 29.9H48.3M42.8 24.4L48.3 29.9L42.8 35.4'/><path d='M23.5 41.7H36.7M29 36.2L23.5 41.7L29 47.2'/></g><g fill='currentColor'><rect x='25.2' y='28.8' width='2.2' height='2.2'/><rect x='29.9' y='28.8' width='2.2' height='2.2'/><rect x='39.5' y='40.6' width='2.2' height='2.2'/><rect x='44.4' y='40.6' width='2.2' height='2.2'/></g></svg></div>
<div class='c cg' style='left:2331px;top:1351px'><svg class=ar viewBox='0 0 72 72' width=72 height=72><g fill='none' stroke='currentColor' stroke-width='1.7'><path d='M34.8 29.9H48.3M42.8 24.4L48.3 29.9L42.8 35.4'/><path d='M23.5 41.7H36.7M29 36.2L23.5 41.7L29 47.2'/></g><g fill='currentColor'><rect x='25.2' y='28.8' width='2.2' height='2.2'/><rect x='29.9' y='28.8' width='2.2' height='2.2'/><rect x='39.5' y='40.6' width='2.2' height='2.2'/><rect x='44.4' y='40.6' width='2.2' height='2.2'/></g></svg></div>
<div class='c cg' style='left:2421px;top:1351px'><svg class=ar viewBox='0 0 72 72' width=72 height=72><g fill='none' stroke='currentColor' stroke-width='1.7'><path d='M34.8 29.9H48.3M42.8 24.4L48.3 29.9L42.8 35.4'/><path d='M23.5 41.7H36.7M29 36.2L23.5 41.7L29 47.2'/></g><g fill='currentColor'><rect x='25.2' y='28.8' width='2.2' height='2.2'/><rect x='29.9' y='28.8' width='2.2' height='2.2'/><rect x='39.5' y='40.6' width='2.2' height='2.2'/><rect x='44.4' y='40.6' width='2.2' height='2.2'/></g></svg></div>
<div class='c cg' style='left:2511px;top:1351px'><svg class=ar viewBox='0 0 72 72' width=72 height=72><g fill='none' stroke='currentColor' stroke-width='1.7'><path d='M34.8 29.9H48.3M42.8 24.4L48.3 29.9L42.8 35.4'/><path d='M23.5 41.7H36.7M29 36.2L23.5 41.7L29 47.2'/></g><g fill='currentColor'><rect x='25.2' y='28.8' width='2.2' height='2.2'/><rect x='29.9' y='28.8' width='2.2' height='2.2'/><rect x='39.5' y='40.6' width='2.2' height='2.2'/><rect x='44.4' y='40.6' width='2.2' height='2.2'/></g></svg></div>
<div class='c cg' style='left:2601px;top:1351px'><svg class=ar viewBox='0 0 72 72' width=72 height=72><g fill='none' stroke='currentColor' stroke-width='1.7'><path d='M34.8 29.9H48.3M42.8 24.4L48.3 29.9L42.8 35.4'/><path d='M23.5 41.7H36.7M29 36.2L23.5 41.7L29 47.2'/></g><g fill='currentColor'><rect x='25.2' y='28.8' width='2.2' height='2.2'/><rect x='29.9' y='28.8' width='2.2' height='2.2'/><rect x='39.5' y='40.6' width='2.2' height='2.2'/><rect x='44.4' y='40.6' width='2.2' height='2.2'/></g></svg></div>
<div class='c cg' style='left:2691px;top:1351px'><svg class=ar viewBox='0 0 72 72' width=72 height=72><g fill='none' stroke='currentColor' stroke-width='1.7'><path d='M34.8 29.9H48.3M42.8 24.4L48.3 29.9L42.8 35.4'/><path d='M23.5 41.7H36.7M29 36.2L23.5 41.7L29 47.2'/></g><g fill='currentColor'><rect x='25.2' y='28.8' width='2.2' height='2.2'/><rect x='29.9' y='28.8' width='2.2' height='2.2'/><rect x='39.5' y='40.6' width='2.2' height='2.2'/><rect x='44.4' y='40.6' width='2.2' height='2.2'/></g></svg></div>
<div class='c cg' style='left:2781px;top:1351px'><svg class=ar viewBox='0 0 72 72' width=72 height=72><g fill='none' stroke='currentColor' stroke-width='1.7'><path d='M34.8 29.9H48.3M42.8 24.4L48.3 29.9L42.8 35.4'/><path d='M23.5 41.7H36.7M29 36.2L23.5 41.7L29 47.2'/></g><g fill='currentColor'><rect x='25.2' y='28.8' width='2.2' height='2.2'/><rect x='29.9' y='28.8' width='2.2' height='2.2'/><rect x='39.5' y='40.6' width='2.2' height='2.2'/><rect x='44.4' y='40.6' width='2.2' height='2.2'/></g></svg></div>
<div class='c ce' style='left:2871px;top:1351px'></div>
<div class='c ce' style='left:2961px;top:1351px'></div>
<div class='c cg' style='left:981px;top:1441px'></div>
<div class='c cb' style='left:1071px;top:1441px'></div>
<div class='c ce' style='left:1161px;top:1441px'></div>
<div class='c cg' style='left:1251px;top:1441px'></div>
<div class='c cg' style='left:1341px;top:1441px'></div>
<div class='c cg' style='left:1431px;top:1441px'><svg class=ar viewBox='0 0 72 72' width=72 height=72><g fill='none' stroke='currentColor' stroke-width='1.7'><path d='M34.8 29.9H48.3M42.8 24.4L48.3 29.9L42.8 35.4'/><path d='M23.5 41.7H36.7M29 36.2L23.5 41.7L29 47.2'/></g><g fill='currentColor'><rect x='25.2' y='28.8' width='2.2' height='2.2'/><rect x='29.9' y='28.8' width='2.2' height='2.2'/><rect x='39.5' y='40.6' width='2.2' height='2.2'/><rect x='44.4' y='40.6' width='2.2' height='2.2'/></g></svg></div>
<div class='c cr' style='left:1521px;top:1441px'></div>
<div class='c cg' style='left:1611px;top:1441px'><svg class=ar viewBox='0 0 72 72' width=72 height=72><g fill='none' stroke='currentColor' stroke-width='1.7'><path d='M34.8 29.9H48.3M42.8 24.4L48.3 29.9L42.8 35.4'/><path d='M23.5 41.7H36.7M29 36.2L23.5 41.7L29 47.2'/></g><g fill='currentColor'><rect x='25.2' y='28.8' width='2.2' height='2.2'/><rect x='29.9' y='28.8' width='2.2' height='2.2'/><rect x='39.5' y='40.6' width='2.2' height='2.2'/><rect x='44.4' y='40.6' width='2.2' height='2.2'/></g></svg></div>
<div class='c cr' style='left:1701px;top:1441px'></div>
<div class='c ce' style='left:1791px;top:1441px'></div>
<div class='c cg' style='left:1881px;top:1441px'><svg class=ar viewBox='0 0 72 72' width=72 height=72><g fill='none' stroke='currentColor' stroke-width='1.7'><path d='M34.8 29.9H48.3M42.8 24.4L48.3 29.9L42.8 35.4'/><path d='M23.5 41.7H36.7M29 36.2L23.5 41.7L29 47.2'/></g><g fill='currentColor'><rect x='25.2' y='28.8' width='2.2' height='2.2'/><rect x='29.9' y='28.8' width='2.2' height='2.2'/><rect x='39.5' y='40.6' width='2.2' height='2.2'/><rect x='44.4' y='40.6' width='2.2' height='2.2'/></g></svg></div>
<div class='c cg' style='left:1971px;top:1441px'><svg class=ar viewBox='0 0 72 72' width=72 height=72><g fill='none' stroke='currentColor' stroke-width='1.7'><path d='M34.8 29.9H48.3M42.8 24.4L48.3 29.9L42.8 35.4'/><path d='M23.5 41.7H36.7M29 36.2L23.5 41.7L29 47.2'/></g><g fill='currentColor'><rect x='25.2' y='28.8' width='2.2' height='2.2'/><rect x='29.9' y='28.8' width='2.2' height='2.2'/><rect x='39.5' y='40.6' width='2.2' height='2.2'/><rect x='44.4' y='40.6' width='2.2' height='2.2'/></g></svg></div>
<div class='c cg' style='left:2061px;top:1441px'><svg class=ar viewBox='0 0 72 72' width=72 height=72><g fill='none' stroke='currentColor' stroke-width='1.7'><path d='M34.8 29.9H48.3M42.8 24.4L48.3 29.9L42.8 35.4'/><path d='M23.5 41.7H36.7M29 36.2L23.5 41.7L29 47.2'/></g><g fill='currentColor'><rect x='25.2' y='28.8' width='2.2' height='2.2'/><rect x='29.9' y='28.8' width='2.2' height='2.2'/><rect x='39.5' y='40.6' width='2.2' height='2.2'/><rect x='44.4' y='40.6' width='2.2' height='2.2'/></g></svg></div>
<div class='c cg' style='left:2151px;top:1441px'><svg class=ar viewBox='0 0 72 72' width=72 height=72><g fill='none' stroke='currentColor' stroke-width='1.7'><path d='M34.8 29.9H48.3M42.8 24.4L48.3 29.9L42.8 35.4'/><path d='M23.5 41.7H36.7M29 36.2L23.5 41.7L29 47.2'/></g><g fill='currentColor'><rect x='25.2' y='28.8' width='2.2' height='2.2'/><rect x='29.9' y='28.8' width='2.2' height='2.2'/><rect x='39.5' y='40.6' width='2.2' height='2.2'/><rect x='44.4' y='40.6' width='2.2' height='2.2'/></g></svg></div>
<div class='c cg' style='left:2241px;top:1441px'><svg class=ar viewBox='0 0 72 72' width=72 height=72><g fill='none' stroke='currentColor' stroke-width='1.7'><path d='M34.8 29.9H48.3M42.8 24.4L48.3 29.9L42.8 35.4'/><path d='M23.5 41.7H36.7M29 36.2L23.5 41.7L29 47.2'/></g><g fill='currentColor'><rect x='25.2' y='28.8' width='2.2' height='2.2'/><rect x='29.9' y='28.8' width='2.2' height='2.2'/><rect x='39.5' y='40.6' width='2.2' height='2.2'/><rect x='44.4' y='40.6' width='2.2' height='2.2'/></g></svg></div>
<div class='c cg' style='left:2331px;top:1441px'><svg class=ar viewBox='0 0 72 72' width=72 height=72><g fill='none' stroke='currentColor' stroke-width='1.7'><path d='M34.8 29.9H48.3M42.8 24.4L48.3 29.9L42.8 35.4'/><path d='M23.5 41.7H36.7M29 36.2L23.5 41.7L29 47.2'/></g><g fill='currentColor'><rect x='25.2' y='28.8' width='2.2' height='2.2'/><rect x='29.9' y='28.8' width='2.2' height='2.2'/><rect x='39.5' y='40.6' width='2.2' height='2.2'/><rect x='44.4' y='40.6' width='2.2' height='2.2'/></g></svg></div>
<div class='c cg' style='left:2421px;top:1441px'><svg class=ar viewBox='0 0 72 72' width=72 height=72><g fill='none' stroke='currentColor' stroke-width='1.7'><path d='M34.8 29.9H48.3M42.8 24.4L48.3 29.9L42.8 35.4'/><path d='M23.5 41.7H36.7M29 36.2L23.5 41.7L29 47.2'/></g><g fill='currentColor'><rect x='25.2' y='28.8' width='2.2' height='2.2'/><rect x='29.9' y='28.8' width='2.2' height='2.2'/><rect x='39.5' y='40.6' width='2.2' height='2.2'/><rect x='44.4' y='40.6' width='2.2' height='2.2'/></g></svg></div>
<div class='c cg' style='left:2511px;top:1441px'><svg class=ar viewBox='0 0 72 72' width=72 height=72><g fill='none' stroke='currentColor' stroke-width='1.7'><path d='M34.8 29.9H48.3M42.8 24.4L48.3 29.9L42.8 35.4'/><path d='M23.5 41.7H36.7M29 36.2L23.5 41.7L29 47.2'/></g><g fill='currentColor'><rect x='25.2' y='28.8' width='2.2' height='2.2'/><rect x='29.9' y='28.8' width='2.2' height='2.2'/><rect x='39.5' y='40.6' width='2.2' height='2.2'/><rect x='44.4' y='40.6' width='2.2' height='2.2'/></g></svg></div>
<div class='c cg' style='left:2601px;top:1441px'><svg class=ar viewBox='0 0 72 72' width=72 height=72><g fill='none' stroke='currentColor' stroke-width='1.7'><path d='M34.8 29.9H48.3M42.8 24.4L48.3 29.9L42.8 35.4'/><path d='M23.5 41.7H36.7M29 36.2L23.5 41.7L29 47.2'/></g><g fill='currentColor'><rect x='25.2' y='28.8' width='2.2' height='2.2'/><rect x='29.9' y='28.8' width='2.2' height='2.2'/><rect x='39.5' y='40.6' width='2.2' height='2.2'/><rect x='44.4' y='40.6' width='2.2' height='2.2'/></g></svg></div>
<div class='c cg' style='left:2691px;top:1441px'><svg class=ar viewBox='0 0 72 72' width=72 height=72><g fill='none' stroke='currentColor' stroke-width='1.7'><path d='M34.8 29.9H48.3M42.8 24.4L48.3 29.9L42.8 35.4'/><path d='M23.5 41.7H36.7M29 36.2L23.5 41.7L29 47.2'/></g><g fill='currentColor'><rect x='25.2' y='28.8' width='2.2' height='2.2'/><rect x='29.9' y='28.8' width='2.2' height='2.2'/><rect x='39.5' y='40.6' width='2.2' height='2.2'/><rect x='44.4' y='40.6' width='2.2' height='2.2'/></g></svg></div>
<div class='c cg' style='left:2781px;top:1441px'><svg class=ar viewBox='0 0 72 72' width=72 height=72><g fill='none' stroke='currentColor' stroke-width='1.7'><path d='M34.8 29.9H48.3M42.8 24.4L48.3 29.9L42.8 35.4'/><path d='M23.5 41.7H36.7M29 36.2L23.5 41.7L29 47.2'/></g><g fill='currentColor'><rect x='25.2' y='28.8' width='2.2' height='2.2'/><rect x='29.9' y='28.8' width='2.2' height='2.2'/><rect x='39.5' y='40.6' width='2.2' height='2.2'/><rect x='44.4' y='40.6' width='2.2' height='2.2'/></g></svg></div>
<div class='c ce' style='left:2871px;top:1441px'></div>
<div class='c ce' style='left:2961px;top:1441px'></div>
<div class='c cg' style='left:981px;top:1531px'></div>
<div class='c cb' style='left:1071px;top:1531px'></div>
<div class='c ce' style='left:1161px;top:1531px'></div>
<div class='c cr' style='left:1251px;top:1531px'><svg class=ar viewBox='0 0 72 72' width=72 height=72><g fill='none' stroke='currentColor' stroke-width='1.7'><path d='M34.8 29.9H48.3M42.8 24.4L48.3 29.9L42.8 35.4'/><path d='M23.5 41.7H36.7M29 36.2L23.5 41.7L29 47.2'/></g><g fill='currentColor'><rect x='25.2' y='28.8' width='2.2' height='2.2'/><rect x='29.9' y='28.8' width='2.2' height='2.2'/><rect x='39.5' y='40.6' width='2.2' height='2.2'/><rect x='44.4' y='40.6' width='2.2' height='2.2'/></g></svg></div>
<div class='c cr' style='left:1341px;top:1531px'><svg class=ar viewBox='0 0 72 72' width=72 height=72><g fill='none' stroke='currentColor' stroke-width='1.7'><path d='M34.8 29.9H48.3M42.8 24.4L48.3 29.9L42.8 35.4'/><path d='M23.5 41.7H36.7M29 36.2L23.5 41.7L29 47.2'/></g><g fill='currentColor'><rect x='25.2' y='28.8' width='2.2' height='2.2'/><rect x='29.9' y='28.8' width='2.2' height='2.2'/><rect x='39.5' y='40.6' width='2.2' height='2.2'/><rect x='44.4' y='40.6' width='2.2' height='2.2'/></g></svg></div>
<div class='c cr' style='left:1431px;top:1531px'><svg class=ar viewBox='0 0 72 72' width=72 height=72><g fill='none' stroke='currentColor' stroke-width='1.7'><path d='M34.8 29.9H48.3M42.8 24.4L48.3 29.9L42.8 35.4'/><path d='M23.5 41.7H36.7M29 36.2L23.5 41.7L29 47.2'/></g><g fill='currentColor'><rect x='25.2' y='28.8' width='2.2' height='2.2'/><rect x='29.9' y='28.8' width='2.2' height='2.2'/><rect x='39.5' y='40.6' width='2.2' height='2.2'/><rect x='44.4' y='40.6' width='2.2' height='2.2'/></g></svg></div>
<div class='c cr' style='left:1521px;top:1531px'><svg class=ar viewBox='0 0 72 72' width=72 height=72><g fill='none' stroke='currentColor' stroke-width='1.7'><path d='M34.8 29.9H48.3M42.8 24.4L48.3 29.9L42.8 35.4'/><path d='M23.5 41.7H36.7M29 36.2L23.5 41.7L29 47.2'/></g><g fill='currentColor'><rect x='25.2' y='28.8' width='2.2' height='2.2'/><rect x='29.9' y='28.8' width='2.2' height='2.2'/><rect x='39.5' y='40.6' width='2.2' height='2.2'/><rect x='44.4' y='40.6' width='2.2' height='2.2'/></g></svg></div>
<div class='c cr' style='left:1611px;top:1531px'><svg class=ar viewBox='0 0 72 72' width=72 height=72><g fill='none' stroke='currentColor' stroke-width='1.7'><path d='M34.8 29.9H48.3M42.8 24.4L48.3 29.9L42.8 35.4'/><path d='M23.5 41.7H36.7M29 36.2L23.5 41.7L29 47.2'/></g><g fill='currentColor'><rect x='25.2' y='28.8' width='2.2' height='2.2'/><rect x='29.9' y='28.8' width='2.2' height='2.2'/><rect x='39.5' y='40.6' width='2.2' height='2.2'/><rect x='44.4' y='40.6' width='2.2' height='2.2'/></g></svg></div>
<div class='c cr' style='left:1701px;top:1531px'><svg class=ar viewBox='0 0 72 72' width=72 height=72><g fill='none' stroke='currentColor' stroke-width='1.7'><path d='M34.8 29.9H48.3M42.8 24.4L48.3 29.9L42.8 35.4'/><path d='M23.5 41.7H36.7M29 36.2L23.5 41.7L29 47.2'/></g><g fill='currentColor'><rect x='25.2' y='28.8' width='2.2' height='2.2'/><rect x='29.9' y='28.8' width='2.2' height='2.2'/><rect x='39.5' y='40.6' width='2.2' height='2.2'/><rect x='44.4' y='40.6' width='2.2' height='2.2'/></g></svg></div>
<div class='c ce' style='left:1791px;top:1531px'></div>
<div class='c cr' style='left:1881px;top:1531px'><svg class=ar viewBox='0 0 72 72' width=72 height=72><g fill='none' stroke='currentColor' stroke-width='1.7'><path d='M34.8 29.9H48.3M42.8 24.4L48.3 29.9L42.8 35.4'/><path d='M23.5 41.7H36.7M29 36.2L23.5 41.7L29 47.2'/></g><g fill='currentColor'><rect x='25.2' y='28.8' width='2.2' height='2.2'/><rect x='29.9' y='28.8' width='2.2' height='2.2'/><rect x='39.5' y='40.6' width='2.2' height='2.2'/><rect x='44.4' y='40.6' width='2.2' height='2.2'/></g></svg></div>
<div class='c cr' style='left:1971px;top:1531px'><svg class=ar viewBox='0 0 72 72' width=72 height=72><g fill='none' stroke='currentColor' stroke-width='1.7'><path d='M34.8 29.9H48.3M42.8 24.4L48.3 29.9L42.8 35.4'/><path d='M23.5 41.7H36.7M29 36.2L23.5 41.7L29 47.2'/></g><g fill='currentColor'><rect x='25.2' y='28.8' width='2.2' height='2.2'/><rect x='29.9' y='28.8' width='2.2' height='2.2'/><rect x='39.5' y='40.6' width='2.2' height='2.2'/><rect x='44.4' y='40.6' width='2.2' height='2.2'/></g></svg></div>
<div class='c cr' style='left:2061px;top:1531px'><svg class=ar viewBox='0 0 72 72' width=72 height=72><g fill='none' stroke='currentColor' stroke-width='1.7'><path d='M34.8 29.9H48.3M42.8 24.4L48.3 29.9L42.8 35.4'/><path d='M23.5 41.7H36.7M29 36.2L23.5 41.7L29 47.2'/></g><g fill='currentColor'><rect x='25.2' y='28.8' width='2.2' height='2.2'/><rect x='29.9' y='28.8' width='2.2' height='2.2'/><rect x='39.5' y='40.6' width='2.2' height='2.2'/><rect x='44.4' y='40.6' width='2.2' height='2.2'/></g></svg></div>
<div class='c cr' style='left:2151px;top:1531px'><svg class=ar viewBox='0 0 72 72' width=72 height=72><g fill='none' stroke='currentColor' stroke-width='1.7'><path d='M34.8 29.9H48.3M42.8 24.4L48.3 29.9L42.8 35.4'/><path d='M23.5 41.7H36.7M29 36.2L23.5 41.7L29 47.2'/></g><g fill='currentColor'><rect x='25.2' y='28.8' width='2.2' height='2.2'/><rect x='29.9' y='28.8' width='2.2' height='2.2'/><rect x='39.5' y='40.6' width='2.2' height='2.2'/><rect x='44.4' y='40.6' width='2.2' height='2.2'/></g></svg><i class=dot></i></div>
<div class='c cr' style='left:2241px;top:1531px'><svg class=ar viewBox='0 0 72 72' width=72 height=72><g fill='none' stroke='currentColor' stroke-width='1.7'><path d='M34.8 29.9H48.3M42.8 24.4L48.3 29.9L42.8 35.4'/><path d='M23.5 41.7H36.7M29 36.2L23.5 41.7L29 47.2'/></g><g fill='currentColor'><rect x='25.2' y='28.8' width='2.2' height='2.2'/><rect x='29.9' y='28.8' width='2.2' height='2.2'/><rect x='39.5' y='40.6' width='2.2' height='2.2'/><rect x='44.4' y='40.6' width='2.2' height='2.2'/></g></svg><i class=dot></i></div>
<div class='c cr' style='left:2331px;top:1531px'><svg class=ar viewBox='0 0 72 72' width=72 height=72><g fill='none' stroke='currentColor' stroke-width='1.7'><path d='M34.8 29.9H48.3M42.8 24.4L48.3 29.9L42.8 35.4'/><path d='M23.5 41.7H36.7M29 36.2L23.5 41.7L29 47.2'/></g><g fill='currentColor'><rect x='25.2' y='28.8' width='2.2' height='2.2'/><rect x='29.9' y='28.8' width='2.2' height='2.2'/><rect x='39.5' y='40.6' width='2.2' height='2.2'/><rect x='44.4' y='40.6' width='2.2' height='2.2'/></g></svg><i class=dot></i></div>
<div class='c cr' style='left:2421px;top:1531px'><svg class=ar viewBox='0 0 72 72' width=72 height=72><g fill='none' stroke='currentColor' stroke-width='1.7'><path d='M34.8 29.9H48.3M42.8 24.4L48.3 29.9L42.8 35.4'/><path d='M23.5 41.7H36.7M29 36.2L23.5 41.7L29 47.2'/></g><g fill='currentColor'><rect x='25.2' y='28.8' width='2.2' height='2.2'/><rect x='29.9' y='28.8' width='2.2' height='2.2'/><rect x='39.5' y='40.6' width='2.2' height='2.2'/><rect x='44.4' y='40.6' width='2.2' height='2.2'/></g></svg><i class=dot></i></div>
<div class='c cr' style='left:2511px;top:1531px'><svg class=ar viewBox='0 0 72 72' width=72 height=72><g fill='none' stroke='currentColor' stroke-width='1.7'><path d='M34.8 29.9H48.3M42.8 24.4L48.3 29.9L42.8 35.4'/><path d='M23.5 41.7H36.7M29 36.2L23.5 41.7L29 47.2'/></g><g fill='currentColor'><rect x='25.2' y='28.8' width='2.2' height='2.2'/><rect x='29.9' y='28.8' width='2.2' height='2.2'/><rect x='39.5' y='40.6' width='2.2' height='2.2'/><rect x='44.4' y='40.6' width='2.2' height='2.2'/></g></svg><i class=dot></i></div>
<div class='c cr' style='left:2601px;top:1531px'><svg class=ar viewBox='0 0 72 72' width=72 height=72><g fill='none' stroke='currentColor' stroke-width='1.7'><path d='M34.8 29.9H48.3M42.8 24.4L48.3 29.9L42.8 35.4'/><path d='M23.5 41.7H36.7M29 36.2L23.5 41.7L29 47.2'/></g><g fill='currentColor'><rect x='25.2' y='28.8' width='2.2' height='2.2'/><rect x='29.9' y='28.8' width='2.2' height='2.2'/><rect x='39.5' y='40.6' width='2.2' height='2.2'/><rect x='44.4' y='40.6' width='2.2' height='2.2'/></g></svg><i class=dot></i></div>
<div class='c cr' style='left:2691px;top:1531px'><svg class=ar viewBox='0 0 72 72' width=72 height=72><g fill='none' stroke='currentColor' stroke-width='1.7'><path d='M34.8 29.9H48.3M42.8 24.4L48.3 29.9L42.8 35.4'/><path d='M23.5 41.7H36.7M29 36.2L23.5 41.7L29 47.2'/></g><g fill='currentColor'><rect x='25.2' y='28.8' width='2.2' height='2.2'/><rect x='29.9' y='28.8' width='2.2' height='2.2'/><rect x='39.5' y='40.6' width='2.2' height='2.2'/><rect x='44.4' y='40.6' width='2.2' height='2.2'/></g></svg><i class=dot></i></div>
<div class='c cr' style='left:2781px;top:1531px'><svg class=ar viewBox='0 0 72 72' width=72 height=72><g fill='none' stroke='currentColor' stroke-width='1.7'><path d='M34.8 29.9H48.3M42.8 24.4L48.3 29.9L42.8 35.4'/><path d='M23.5 41.7H36.7M29 36.2L23.5 41.7L29 47.2'/></g><g fill='currentColor'><rect x='25.2' y='28.8' width='2.2' height='2.2'/><rect x='29.9' y='28.8' width='2.2' height='2.2'/><rect x='39.5' y='40.6' width='2.2' height='2.2'/><rect x='44.4' y='40.6' width='2.2' height='2.2'/></g></svg><i class=dot></i></div>
<div class='c ce' style='left:2871px;top:1531px'></div>
<div class='c ce' style='left:2961px;top:1531px'></div>
<div class='c cg' style='left:981px;top:1621px'></div>
<div class='c cb' style='left:1071px;top:1621px'></div>
<div class='c ce' style='left:1161px;top:1621px'></div>
<div class='c cg' style='left:1251px;top:1621px'></div>
<div class='c cg' style='left:1341px;top:1621px'></div>
<div class='c cg' style='left:1431px;top:1621px'></div>
<div class='c cr' style='left:1521px;top:1621px'></div>
<div class='c cg' style='left:1611px;top:1621px'><svg class=ar viewBox='0 0 72 72' width=72 height=72><g fill='none' stroke='currentColor' stroke-width='1.7'><path d='M34.8 29.9H48.3M42.8 24.4L48.3 29.9L42.8 35.4'/><path d='M23.5 41.7H36.7M29 36.2L23.5 41.7L29 47.2'/></g><g fill='currentColor'><rect x='25.2' y='28.8' width='2.2' height='2.2'/><rect x='29.9' y='28.8' width='2.2' height='2.2'/><rect x='39.5' y='40.6' width='2.2' height='2.2'/><rect x='44.4' y='40.6' width='2.2' height='2.2'/></g></svg></div>
<div class='c cr' style='left:1701px;top:1621px'></div>
<div class='c ce' style='left:1791px;top:1621px'></div>
<div class='c cg' style='left:1881px;top:1621px'><svg class=ar viewBox='0 0 72 72' width=72 height=72><g fill='none' stroke='currentColor' stroke-width='1.7'><path d='M34.8 29.9H48.3M42.8 24.4L48.3 29.9L42.8 35.4'/><path d='M23.5 41.7H36.7M29 36.2L23.5 41.7L29 47.2'/></g><g fill='currentColor'><rect x='25.2' y='28.8' width='2.2' height='2.2'/><rect x='29.9' y='28.8' width='2.2' height='2.2'/><rect x='39.5' y='40.6' width='2.2' height='2.2'/><rect x='44.4' y='40.6' width='2.2' height='2.2'/></g></svg></div>
<div class='c cg' style='left:1971px;top:1621px'><svg class=ar viewBox='0 0 72 72' width=72 height=72><g fill='none' stroke='currentColor' stroke-width='1.7'><path d='M34.8 29.9H48.3M42.8 24.4L48.3 29.9L42.8 35.4'/><path d='M23.5 41.7H36.7M29 36.2L23.5 41.7L29 47.2'/></g><g fill='currentColor'><rect x='25.2' y='28.8' width='2.2' height='2.2'/><rect x='29.9' y='28.8' width='2.2' height='2.2'/><rect x='39.5' y='40.6' width='2.2' height='2.2'/><rect x='44.4' y='40.6' width='2.2' height='2.2'/></g></svg></div>
<div class='c cg' style='left:2061px;top:1621px'><svg class=ar viewBox='0 0 72 72' width=72 height=72><g fill='none' stroke='currentColor' stroke-width='1.7'><path d='M34.8 29.9H48.3M42.8 24.4L48.3 29.9L42.8 35.4'/><path d='M23.5 41.7H36.7M29 36.2L23.5 41.7L29 47.2'/></g><g fill='currentColor'><rect x='25.2' y='28.8' width='2.2' height='2.2'/><rect x='29.9' y='28.8' width='2.2' height='2.2'/><rect x='39.5' y='40.6' width='2.2' height='2.2'/><rect x='44.4' y='40.6' width='2.2' height='2.2'/></g></svg></div>
<div class='c cg' style='left:2151px;top:1621px'><svg class=ar viewBox='0 0 72 72' width=72 height=72><g fill='none' stroke='currentColor' stroke-width='1.7'><path d='M34.8 29.9H48.3M42.8 24.4L48.3 29.9L42.8 35.4'/><path d='M23.5 41.7H36.7M29 36.2L23.5 41.7L29 47.2'/></g><g fill='currentColor'><rect x='25.2' y='28.8' width='2.2' height='2.2'/><rect x='29.9' y='28.8' width='2.2' height='2.2'/><rect x='39.5' y='40.6' width='2.2' height='2.2'/><rect x='44.4' y='40.6' width='2.2' height='2.2'/></g></svg></div>
<div class='c cg' style='left:2241px;top:1621px'><svg class=ar viewBox='0 0 72 72' width=72 height=72><g fill='none' stroke='currentColor' stroke-width='1.7'><path d='M34.8 29.9H48.3M42.8 24.4L48.3 29.9L42.8 35.4'/><path d='M23.5 41.7H36.7M29 36.2L23.5 41.7L29 47.2'/></g><g fill='currentColor'><rect x='25.2' y='28.8' width='2.2' height='2.2'/><rect x='29.9' y='28.8' width='2.2' height='2.2'/><rect x='39.5' y='40.6' width='2.2' height='2.2'/><rect x='44.4' y='40.6' width='2.2' height='2.2'/></g></svg></div>
<div class='c cg' style='left:2331px;top:1621px'><svg class=ar viewBox='0 0 72 72' width=72 height=72><g fill='none' stroke='currentColor' stroke-width='1.7'><path d='M34.8 29.9H48.3M42.8 24.4L48.3 29.9L42.8 35.4'/><path d='M23.5 41.7H36.7M29 36.2L23.5 41.7L29 47.2'/></g><g fill='currentColor'><rect x='25.2' y='28.8' width='2.2' height='2.2'/><rect x='29.9' y='28.8' width='2.2' height='2.2'/><rect x='39.5' y='40.6' width='2.2' height='2.2'/><rect x='44.4' y='40.6' width='2.2' height='2.2'/></g></svg></div>
<div class='c cg' style='left:2421px;top:1621px'><svg class=ar viewBox='0 0 72 72' width=72 height=72><g fill='none' stroke='currentColor' stroke-width='1.7'><path d='M34.8 29.9H48.3M42.8 24.4L48.3 29.9L42.8 35.4'/><path d='M23.5 41.7H36.7M29 36.2L23.5 41.7L29 47.2'/></g><g fill='currentColor'><rect x='25.2' y='28.8' width='2.2' height='2.2'/><rect x='29.9' y='28.8' width='2.2' height='2.2'/><rect x='39.5' y='40.6' width='2.2' height='2.2'/><rect x='44.4' y='40.6' width='2.2' height='2.2'/></g></svg></div>
<div class='c cg' style='left:2511px;top:1621px'><svg class=ar viewBox='0 0 72 72' width=72 height=72><g fill='none' stroke='currentColor' stroke-width='1.7'><path d='M34.8 29.9H48.3M42.8 24.4L48.3 29.9L42.8 35.4'/><path d='M23.5 41.7H36.7M29 36.2L23.5 41.7L29 47.2'/></g><g fill='currentColor'><rect x='25.2' y='28.8' width='2.2' height='2.2'/><rect x='29.9' y='28.8' width='2.2' height='2.2'/><rect x='39.5' y='40.6' width='2.2' height='2.2'/><rect x='44.4' y='40.6' width='2.2' height='2.2'/></g></svg></div>
<div class='c cg' style='left:2601px;top:1621px'><svg class=ar viewBox='0 0 72 72' width=72 height=72><g fill='none' stroke='currentColor' stroke-width='1.7'><path d='M34.8 29.9H48.3M42.8 24.4L48.3 29.9L42.8 35.4'/><path d='M23.5 41.7H36.7M29 36.2L23.5 41.7L29 47.2'/></g><g fill='currentColor'><rect x='25.2' y='28.8' width='2.2' height='2.2'/><rect x='29.9' y='28.8' width='2.2' height='2.2'/><rect x='39.5' y='40.6' width='2.2' height='2.2'/><rect x='44.4' y='40.6' width='2.2' height='2.2'/></g></svg></div>
<div class='c cg' style='left:2691px;top:1621px'><svg class=ar viewBox='0 0 72 72' width=72 height=72><g fill='none' stroke='currentColor' stroke-width='1.7'><path d='M34.8 29.9H48.3M42.8 24.4L48.3 29.9L42.8 35.4'/><path d='M23.5 41.7H36.7M29 36.2L23.5 41.7L29 47.2'/></g><g fill='currentColor'><rect x='25.2' y='28.8' width='2.2' height='2.2'/><rect x='29.9' y='28.8' width='2.2' height='2.2'/><rect x='39.5' y='40.6' width='2.2' height='2.2'/><rect x='44.4' y='40.6' width='2.2' height='2.2'/></g></svg></div>
<div class='c cg' style='left:2781px;top:1621px'><svg class=ar viewBox='0 0 72 72' width=72 height=72><g fill='none' stroke='currentColor' stroke-width='1.7'><path d='M34.8 29.9H48.3M42.8 24.4L48.3 29.9L42.8 35.4'/><path d='M23.5 41.7H36.7M29 36.2L23.5 41.7L29 47.2'/></g><g fill='currentColor'><rect x='25.2' y='28.8' width='2.2' height='2.2'/><rect x='29.9' y='28.8' width='2.2' height='2.2'/><rect x='39.5' y='40.6' width='2.2' height='2.2'/><rect x='44.4' y='40.6' width='2.2' height='2.2'/></g></svg></div>
<div class='c ce' style='left:2871px;top:1621px'></div>
<div class='c ce' style='left:2961px;top:1621px'></div>
<div class='c cg' style='left:981px;top:1711px'></div>
<div class='c cb' style='left:1071px;top:1711px'></div>
<div class='c ce' style='left:1161px;top:1711px'></div>
<div class='c cr' style='left:1251px;top:1711px'><svg class=ar viewBox='0 0 72 72' width=72 height=72><g fill='none' stroke='currentColor' stroke-width='1.7'><path d='M34.8 29.9H48.3M42.8 24.4L48.3 29.9L42.8 35.4'/><path d='M23.5 41.7H36.7M29 36.2L23.5 41.7L29 47.2'/></g><g fill='currentColor'><rect x='25.2' y='28.8' width='2.2' height='2.2'/><rect x='29.9' y='28.8' width='2.2' height='2.2'/><rect x='39.5' y='40.6' width='2.2' height='2.2'/><rect x='44.4' y='40.6' width='2.2' height='2.2'/></g></svg></div>
<div class='c cr' style='left:1341px;top:1711px'><svg class=ar viewBox='0 0 72 72' width=72 height=72><g fill='none' stroke='currentColor' stroke-width='1.7'><path d='M34.8 29.9H48.3M42.8 24.4L48.3 29.9L42.8 35.4'/><path d='M23.5 41.7H36.7M29 36.2L23.5 41.7L29 47.2'/></g><g fill='currentColor'><rect x='25.2' y='28.8' width='2.2' height='2.2'/><rect x='29.9' y='28.8' width='2.2' height='2.2'/><rect x='39.5' y='40.6' width='2.2' height='2.2'/><rect x='44.4' y='40.6' width='2.2' height='2.2'/></g></svg></div>
<div class='c cr' style='left:1431px;top:1711px'><svg class=ar viewBox='0 0 72 72' width=72 height=72><g fill='none' stroke='currentColor' stroke-width='1.7'><path d='M34.8 29.9H48.3M42.8 24.4L48.3 29.9L42.8 35.4'/><path d='M23.5 41.7H36.7M29 36.2L23.5 41.7L29 47.2'/></g><g fill='currentColor'><rect x='25.2' y='28.8' width='2.2' height='2.2'/><rect x='29.9' y='28.8' width='2.2' height='2.2'/><rect x='39.5' y='40.6' width='2.2' height='2.2'/><rect x='44.4' y='40.6' width='2.2' height='2.2'/></g></svg></div>
<div class='c cr' style='left:1521px;top:1711px'></div>
<div class='c cr' style='left:1611px;top:1711px'><svg class=ar viewBox='0 0 72 72' width=72 height=72><g fill='none' stroke='currentColor' stroke-width='1.7'><path d='M34.8 29.9H48.3M42.8 24.4L48.3 29.9L42.8 35.4'/><path d='M23.5 41.7H36.7M29 36.2L23.5 41.7L29 47.2'/></g><g fill='currentColor'><rect x='25.2' y='28.8' width='2.2' height='2.2'/><rect x='29.9' y='28.8' width='2.2' height='2.2'/><rect x='39.5' y='40.6' width='2.2' height='2.2'/><rect x='44.4' y='40.6' width='2.2' height='2.2'/></g></svg></div>
<div class='c cr' style='left:1701px;top:1711px'><svg class=ar viewBox='0 0 72 72' width=72 height=72><g fill='none' stroke='currentColor' stroke-width='1.7'><path d='M34.8 29.9H48.3M42.8 24.4L48.3 29.9L42.8 35.4'/><path d='M23.5 41.7H36.7M29 36.2L23.5 41.7L29 47.2'/></g><g fill='currentColor'><rect x='25.2' y='28.8' width='2.2' height='2.2'/><rect x='29.9' y='28.8' width='2.2' height='2.2'/><rect x='39.5' y='40.6' width='2.2' height='2.2'/><rect x='44.4' y='40.6' width='2.2' height='2.2'/></g></svg></div>
<div class='c ce' style='left:1791px;top:1711px'></div>
<div class='c cr' style='left:1881px;top:1711px'><svg class=ar viewBox='0 0 72 72' width=72 height=72><g fill='none' stroke='currentColor' stroke-width='1.7'><path d='M34.8 29.9H48.3M42.8 24.4L48.3 29.9L42.8 35.4'/><path d='M23.5 41.7H36.7M29 36.2L23.5 41.7L29 47.2'/></g><g fill='currentColor'><rect x='25.2' y='28.8' width='2.2' height='2.2'/><rect x='29.9' y='28.8' width='2.2' height='2.2'/><rect x='39.5' y='40.6' width='2.2' height='2.2'/><rect x='44.4' y='40.6' width='2.2' height='2.2'/></g></svg></div>
<div class='c cr' style='left:1971px;top:1711px'><svg class=ar viewBox='0 0 72 72' width=72 height=72><g fill='none' stroke='currentColor' stroke-width='1.7'><path d='M34.8 29.9H48.3M42.8 24.4L48.3 29.9L42.8 35.4'/><path d='M23.5 41.7H36.7M29 36.2L23.5 41.7L29 47.2'/></g><g fill='currentColor'><rect x='25.2' y='28.8' width='2.2' height='2.2'/><rect x='29.9' y='28.8' width='2.2' height='2.2'/><rect x='39.5' y='40.6' width='2.2' height='2.2'/><rect x='44.4' y='40.6' width='2.2' height='2.2'/></g></svg></div>
<div class='c cr' style='left:2061px;top:1711px'><svg class=ar viewBox='0 0 72 72' width=72 height=72><g fill='none' stroke='currentColor' stroke-width='1.7'><path d='M34.8 29.9H48.3M42.8 24.4L48.3 29.9L42.8 35.4'/><path d='M23.5 41.7H36.7M29 36.2L23.5 41.7L29 47.2'/></g><g fill='currentColor'><rect x='25.2' y='28.8' width='2.2' height='2.2'/><rect x='29.9' y='28.8' width='2.2' height='2.2'/><rect x='39.5' y='40.6' width='2.2' height='2.2'/><rect x='44.4' y='40.6' width='2.2' height='2.2'/></g></svg></div>
<div class='c cr' style='left:2151px;top:1711px'><svg class=ar viewBox='0 0 72 72' width=72 height=72><g fill='none' stroke='currentColor' stroke-width='1.7'><path d='M34.8 29.9H48.3M42.8 24.4L48.3 29.9L42.8 35.4'/><path d='M23.5 41.7H36.7M29 36.2L23.5 41.7L29 47.2'/></g><g fill='currentColor'><rect x='25.2' y='28.8' width='2.2' height='2.2'/><rect x='29.9' y='28.8' width='2.2' height='2.2'/><rect x='39.5' y='40.6' width='2.2' height='2.2'/><rect x='44.4' y='40.6' width='2.2' height='2.2'/></g></svg></div>
<div class='c cr' style='left:2241px;top:1711px'><svg class=ar viewBox='0 0 72 72' width=72 height=72><g fill='none' stroke='currentColor' stroke-width='1.7'><path d='M34.8 29.9H48.3M42.8 24.4L48.3 29.9L42.8 35.4'/><path d='M23.5 41.7H36.7M29 36.2L23.5 41.7L29 47.2'/></g><g fill='currentColor'><rect x='25.2' y='28.8' width='2.2' height='2.2'/><rect x='29.9' y='28.8' width='2.2' height='2.2'/><rect x='39.5' y='40.6' width='2.2' height='2.2'/><rect x='44.4' y='40.6' width='2.2' height='2.2'/></g></svg></div>
<div class='c cr' style='left:2331px;top:1711px'><svg class=ar viewBox='0 0 72 72' width=72 height=72><g fill='none' stroke='currentColor' stroke-width='1.7'><path d='M34.8 29.9H48.3M42.8 24.4L48.3 29.9L42.8 35.4'/><path d='M23.5 41.7H36.7M29 36.2L23.5 41.7L29 47.2'/></g><g fill='currentColor'><rect x='25.2' y='28.8' width='2.2' height='2.2'/><rect x='29.9' y='28.8' width='2.2' height='2.2'/><rect x='39.5' y='40.6' width='2.2' height='2.2'/><rect x='44.4' y='40.6' width='2.2' height='2.2'/></g></svg></div>
<div class='c cr' style='left:2421px;top:1711px'><svg class=ar viewBox='0 0 72 72' width=72 height=72><g fill='none' stroke='currentColor' stroke-width='1.7'><path d='M34.8 29.9H48.3M42.8 24.4L48.3 29.9L42.8 35.4'/><path d='M23.5 41.7H36.7M29 36.2L23.5 41.7L29 47.2'/></g><g fill='currentColor'><rect x='25.2' y='28.8' width='2.2' height='2.2'/><rect x='29.9' y='28.8' width='2.2' height='2.2'/><rect x='39.5' y='40.6' width='2.2' height='2.2'/><rect x='44.4' y='40.6' width='2.2' height='2.2'/></g></svg></div>
<div class='c cr' style='left:2511px;top:1711px'><svg class=ar viewBox='0 0 72 72' width=72 height=72><g fill='none' stroke='currentColor' stroke-width='1.7'><path d='M34.8 29.9H48.3M42.8 24.4L48.3 29.9L42.8 35.4'/><path d='M23.5 41.7H36.7M29 36.2L23.5 41.7L29 47.2'/></g><g fill='currentColor'><rect x='25.2' y='28.8' width='2.2' height='2.2'/><rect x='29.9' y='28.8' width='2.2' height='2.2'/><rect x='39.5' y='40.6' width='2.2' height='2.2'/><rect x='44.4' y='40.6' width='2.2' height='2.2'/></g></svg></div>
<div class='c cr' style='left:2601px;top:1711px'><svg class=ar viewBox='0 0 72 72' width=72 height=72><g fill='none' stroke='currentColor' stroke-width='1.7'><path d='M34.8 29.9H48.3M42.8 24.4L48.3 29.9L42.8 35.4'/><path d='M23.5 41.7H36.7M29 36.2L23.5 41.7L29 47.2'/></g><g fill='currentColor'><rect x='25.2' y='28.8' width='2.2' height='2.2'/><rect x='29.9' y='28.8' width='2.2' height='2.2'/><rect x='39.5' y='40.6' width='2.2' height='2.2'/><rect x='44.4' y='40.6' width='2.2' height='2.2'/></g></svg></div>
<div class='c cr' style='left:2691px;top:1711px'><svg class=ar viewBox='0 0 72 72' width=72 height=72><g fill='none' stroke='currentColor' stroke-width='1.7'><path d='M34.8 29.9H48.3M42.8 24.4L48.3 29.9L42.8 35.4'/><path d='M23.5 41.7H36.7M29 36.2L23.5 41.7L29 47.2'/></g><g fill='currentColor'><rect x='25.2' y='28.8' width='2.2' height='2.2'/><rect x='29.9' y='28.8' width='2.2' height='2.2'/><rect x='39.5' y='40.6' width='2.2' height='2.2'/><rect x='44.4' y='40.6' width='2.2' height='2.2'/></g></svg></div>
<div class='c cr' style='left:2781px;top:1711px'><svg class=ar viewBox='0 0 72 72' width=72 height=72><g fill='none' stroke='currentColor' stroke-width='1.7'><path d='M34.8 29.9H48.3M42.8 24.4L48.3 29.9L42.8 35.4'/><path d='M23.5 41.7H36.7M29 36.2L23.5 41.7L29 47.2'/></g><g fill='currentColor'><rect x='25.2' y='28.8' width='2.2' height='2.2'/><rect x='29.9' y='28.8' width='2.2' height='2.2'/><rect x='39.5' y='40.6' width='2.2' height='2.2'/><rect x='44.4' y='40.6' width='2.2' height='2.2'/></g></svg></div>
<div class='c ce' style='left:2871px;top:1711px'></div>
<div class='c ce' style='left:2961px;top:1711px'></div>
<div class='c ce' style='left:981px;top:1801px'></div>
<div class='c cb' style='left:1071px;top:1801px'></div>
<div class='c ce' style='left:1161px;top:1801px'></div>
<div class='c ce' style='left:1251px;top:1801px'></div>
<div class='c ce' style='left:1341px;top:1801px'></div>
<div class='c ce' style='left:1431px;top:1801px'></div>
<div class='c ce' style='left:1521px;top:1801px'></div>
<div class='c ce' style='left:1611px;top:1801px'></div>
<div class='c ce' style='left:1701px;top:1801px'></div>
<div class='c ce' style='left:1791px;top:1801px'></div>
<div class='c ce' style='left:1881px;top:1801px'></div>
<div class='c ce' style='left:1971px;top:1801px'></div>
<div class='c ce' style='left:2061px;top:1801px'></div>
<div class='c ce' style='left:2151px;top:1801px'></div>
<div class='c ce' style='left:2241px;top:1801px'></div>
<div class='c ce' style='left:2331px;top:1801px'></div>
<div class='c ce' style='left:2421px;top:1801px'></div>
<div class='c ce' style='left:2511px;top:1801px'></div>
<div class='c ce' style='left:2601px;top:1801px'></div>
<div class='c ce' style='left:2691px;top:1801px'></div>
<div class='c ce' style='left:2781px;top:1801px'></div>
<div class='c ce' style='left:2871px;top:1801px'></div>
<div class='c ce' style='left:2961px;top:1801px'></div>
<div class=t style="left:823.43px;top:1010.16px;font-size:29.4px;line-height:29.4px;color:#5f5f5f;font-weight:400;transform:scale(0.9912,1.0000);">InternetPG</div>
<div class=t style="left:811.54px;top:1100.16px;font-size:29.4px;line-height:29.4px;color:#5f5f5f;font-weight:400;transform:scale(0.9801,1.0000);">Unassigned</div>
<div class=t style="left:734.54px;top:1190.16px;font-size:29.4px;line-height:29.4px;color:#5f5f5f;font-weight:400;transform:scale(0.9565,1.0000);">Consumer_Mobile</div>
<div class=t style="left:668.99px;top:1280.16px;font-size:29.4px;line-height:29.4px;color:#5f5f5f;font-weight:400;transform:scale(0.9059,1.0000);">GLOBAL-IOT-MISC_IOT</div>
<div class=t style="left:691.08px;top:1370.16px;font-size:29.4px;line-height:29.4px;color:#5f5f5f;font-weight:400;transform:scale(0.9170,1.0000);">GLOBAL-IOT-MOBILE</div>
<div class=t style="left:656.89px;top:1460.16px;font-size:29.4px;line-height:29.4px;color:#5f5f5f;font-weight:400;transform:scale(0.9100,1.0000);">GLOBAL-IT-AUDIO_VI...</div>
<div class=t style="left:656.87px;top:1550.16px;font-size:29.4px;line-height:29.4px;color:#5f5f5f;font-weight:400;transform:scale(0.9271,1.0000);">GLOBAL-IT-BUILDING...</div>
<div class=t style="left:656.87px;top:1640.16px;font-size:29.4px;line-height:29.4px;color:#5f5f5f;font-weight:400;transform:scale(0.9346,1.0000);">GLOBAL-IT-COLLABO...</div>
<div class=t style="left:656.87px;top:1730.16px;font-size:29.4px;line-height:29.4px;color:#5f5f5f;font-weight:400;transform:scale(0.9262,1.0000);">GLOBAL-IT-PHYSICAL...</div>
<div class=t style="left:656.87px;top:1820.16px;font-size:29.4px;line-height:29.4px;color:#5f5f5f;font-weight:400;transform:scale(0.9283,1.0000);">GLOBAL-IT-PRINT-SE...</div>
</div></div>
<div class=t style="left:1002.53px;top:929.66px;font-size:29.4px;line-height:29.4px;color:#666666;transform-origin:2.97px 24.84px;transform:rotate(-45deg) scaleX(0.9912);">InternetPG</div>
<div class=t style="left:1093.54px;top:929.66px;font-size:29.4px;line-height:29.4px;color:#666666;transform-origin:1.96px 24.84px;transform:rotate(-45deg) scaleX(0.9801);">Unassigned</div>
<div class=t style="left:1184.54px;top:929.66px;font-size:29.4px;line-height:29.4px;color:#666666;transform-origin:0.96px 24.84px;transform:rotate(-45deg) scaleX(0.9565);">Consumer_Mobile</div>
<div class=t style="left:1274.59px;top:929.66px;font-size:29.4px;line-height:29.4px;color:#666666;transform-origin:0.91px 24.84px;transform:rotate(-45deg) scaleX(0.9059);">GLOBAL-IOT-MISC_IOT</div>
<div class=t style="left:1364.58px;top:929.66px;font-size:29.4px;line-height:29.4px;color:#666666;transform-origin:0.92px 24.84px;transform:rotate(-45deg) scaleX(0.9170);">GLOBAL-IOT-MOBILE</div>
<div class=t style="left:1454.60px;top:929.66px;font-size:29.4px;line-height:29.4px;color:#666666;transform-origin:0.90px 24.84px;transform:rotate(-45deg) scaleX(0.8978);">GLOBAL-IT-AUDIO_VID...</div>
<div class=t style="left:1544.60px;top:929.66px;font-size:29.4px;line-height:29.4px;color:#666666;transform-origin:0.90px 24.84px;transform:rotate(-45deg) scaleX(0.8978);">GLOBAL-IT-BUILDING_...</div>
<div class=t style="left:1634.60px;top:929.66px;font-size:29.4px;line-height:29.4px;color:#666666;transform-origin:0.90px 24.84px;transform:rotate(-45deg) scaleX(0.8978);">GLOBAL-IT-COLLABOR...</div>
<div class=t style="left:1724.60px;top:929.66px;font-size:29.4px;line-height:29.4px;color:#666666;transform-origin:0.90px 24.84px;transform:rotate(-45deg) scaleX(0.8978);">GLOBAL-IT-PHYSICAL_...</div>
<div class=t style="left:1814.60px;top:929.66px;font-size:29.4px;line-height:29.4px;color:#666666;transform-origin:0.90px 24.84px;transform:rotate(-45deg) scaleX(0.8978);">GLOBAL-IT-PRINT-SER...</div>
<div class=t style="left:1904.60px;top:929.66px;font-size:29.4px;line-height:29.4px;color:#666666;transform-origin:0.90px 24.84px;transform:rotate(-45deg) scaleX(0.8978);">GLOBAL-IT-RANDOM_...</div>
<div class=t style="left:1994.60px;top:929.66px;font-size:29.4px;line-height:29.4px;color:#666666;transform-origin:0.90px 24.84px;transform:rotate(-45deg) scaleX(0.8978);">GLOBAL-IT-U-LEGACY _...</div>
<div class=t style="left:2084.60px;top:929.66px;font-size:29.4px;line-height:29.4px;color:#666666;transform-origin:0.90px 24.84px;transform:rotate(-45deg) scaleX(0.8978);">GLOBAL-IT-U-NETWOR...</div>
<div class=t style="left:2174.59px;top:929.66px;font-size:29.4px;line-height:29.4px;color:#666666;transform-origin:0.91px 24.84px;transform:rotate(-45deg) scaleX(0.9115);">GLOBAL-IT-U-PC</div>
<div class=t style="left:2264.59px;top:929.66px;font-size:29.4px;line-height:29.4px;color:#666666;transform-origin:0.91px 24.84px;transform:rotate(-45deg) scaleX(0.9115);">GLOBAL-IT-U-PRINTER</div>
<div class=t style="left:2354.60px;top:929.66px;font-size:29.4px;line-height:29.4px;color:#666666;transform-origin:0.90px 24.84px;transform:rotate(-45deg) scaleX(0.8978);">GLOBAL-IT-U-SERVER_...</div>
<div class=t style="left:2444.60px;top:929.66px;font-size:29.4px;line-height:29.4px;color:#666666;transform-origin:0.90px 24.84px;transform:rotate(-45deg) scaleX(0.8978);">GLOBAL-IT-U-WIFI_AP _...</div>
<div class=t style="left:2534.60px;top:929.66px;font-size:29.4px;line-height:29.4px;color:#666666;transform-origin:0.90px 24.84px;transform:rotate(-45deg) scaleX(0.8978);">GLOBAL-IT-USER-DEA...</div>
<div class=t style="left:2624.59px;top:929.66px;font-size:29.4px;line-height:29.4px;color:#666666;transform-origin:0.91px 24.84px;transform:rotate(-45deg) scaleX(0.9115);">GLOBAL-IT-V-PC</div>
<div class=t style="left:2714.60px;top:929.66px;font-size:29.4px;line-height:29.4px;color:#666666;transform-origin:0.90px 24.84px;transform:rotate(-45deg) scaleX(0.8978);">GLOBAL-IT-V-SERVER_...</div>
<div class=t style="left:2804.60px;top:929.66px;font-size:29.4px;line-height:29.4px;color:#666666;transform-origin:0.90px 24.84px;transform:rotate(-45deg) scaleX(0.8978);">GLOBAL-OT-INDUSTRI...</div>
<div class=t style="left:2893.58px;top:929.66px;font-size:29.4px;line-height:29.4px;color:#666666;transform-origin:1.92px 24.84px;transform:rotate(-45deg) scaleX(0.9600);">Physical_Security</div>
<div class=t style="left:2985.50px;top:929.66px;font-size:29.4px;line-height:29.4px;color:#666666;transform-origin:0.00px 24.84px;transform:rotate(-45deg) scaleX(0.9600);">Verified_Servers_Storage</div>
<div class=t style="left:959.60px;top:919.18px;font-size:29.4px;line-height:29.4px;color:#1f1f1f;transform-origin:0px 24.84px;transform:rotate(-90deg) scaleX(1.0140);">Destination</div>
<div class=t style="left:668.70px;top:44.38px;font-size:60px;line-height:60px;color:#000000;font-weight:700;transform:scale(0.5514,0.6600);-webkit-text-stroke:3.2px #000000;">E</div>
<div class=t style="left:700.86px;top:44.38px;font-size:60px;line-height:60px;color:#000000;font-weight:700;transform:scale(0.5686,0.6600);-webkit-text-stroke:3.2px #000000;">L</div>
<div class=t style="left:729.47px;top:44.38px;font-size:60px;line-height:60px;color:#000000;font-weight:700;transform:scale(0.7167,0.6600);-webkit-text-stroke:3.2px #000000;">I</div>
<div class=t style="left:749.60px;top:44.38px;font-size:60px;line-height:60px;color:#000000;font-weight:700;transform:scale(0.6077,0.6600);-webkit-text-stroke:3.2px #000000;">S</div>
<div class=t style="left:781.63px;top:44.38px;font-size:60px;line-height:60px;color:#000000;font-weight:700;transform:scale(0.6833,0.6600);-webkit-text-stroke:3.2px #000000;">I</div>
<div class=t style="left:800.42px;top:44.38px;font-size:60px;line-height:60px;color:#000000;font-weight:700;transform:scale(0.6154,0.6600);-webkit-text-stroke:3.2px #000000;">T</div>
<div class=t style="left:829.38px;top:44.38px;font-size:60px;line-height:60px;color:#000000;font-weight:700;transform:scale(0.6786,0.6600);-webkit-text-stroke:3.2px #000000;">Y</div>
<div class=t style="left:133.87px;top:1809.51px;font-size:60px;line-height:60px;color:#9ba8b1;font-weight:700;transform:scale(0.6632,0.8556);-webkit-text-stroke:4px #9ba8b1;">E</div>
<div class=t style="left:172.92px;top:1809.51px;font-size:60px;line-height:60px;color:#9ba8b1;font-weight:700;transform:scale(0.6914,0.8556);-webkit-text-stroke:4px #9ba8b1;">L</div>
<div class=t style="left:208.18px;top:1809.51px;font-size:60px;line-height:60px;color:#9ba8b1;font-weight:700;transform:scale(0.7615,0.8556);-webkit-text-stroke:4px #9ba8b1;">I</div>
<div class=t style="left:232.70px;top:1810.59px;font-size:60px;line-height:60px;color:#9ba8b1;font-weight:700;transform:scale(0.6976,0.8191);-webkit-text-stroke:4px #9ba8b1;">S</div>
<div class=t style="left:270.86px;top:1809.51px;font-size:60px;line-height:60px;color:#9ba8b1;font-weight:700;transform:scale(0.7692,0.8556);-webkit-text-stroke:4px #9ba8b1;">I</div>
<div class=t style="left:293.08px;top:1809.51px;font-size:60px;line-height:60px;color:#9ba8b1;font-weight:700;transform:scale(0.7795,0.8556);-webkit-text-stroke:4px #9ba8b1;">T</div>
<div class=t style="left:329.83px;top:1809.51px;font-size:60px;line-height:60px;color:#9ba8b1;font-weight:700;transform:scale(0.7636,0.8556);-webkit-text-stroke:4px #9ba8b1;">Y</div>
<div class=t style="left:170.46px;top:198.31px;font-size:38.1px;line-height:38.1px;color:#9dbdd1;font-weight:400;transform:scale(1.0223,1.0000);">Overview</div>
<div class=t style="left:169.42px;top:306.31px;font-size:38.1px;line-height:38.1px;color:#9dbdd1;font-weight:400;transform:scale(1.0252,1.0000);">Devices</div>
<div class=t style="left:169.45px;top:414.31px;font-size:38.1px;line-height:38.1px;color:#e9f1f6;font-weight:400;transform:scale(1.0165,1.0000);">Policies</div>
<div class=t style="left:172.50px;top:522.31px;font-size:38.1px;line-height:38.1px;color:#9dbdd1;font-weight:400;transform:scale(1.0067,1.0000);">Virtual Edges</div>
<div class=t style="left:172.50px;top:630.31px;font-size:38.1px;line-height:38.1px;color:#9dbdd1;font-weight:400;transform:scale(1.0298,1.0000);">Analytics</div>
<div class=t style="left:171.48px;top:738.31px;font-size:38.1px;line-height:38.1px;color:#9dbdd1;font-weight:400;transform:scale(1.0234,1.0000);">Tools &amp; Utilities</div>
<div class=t style="left:169.32px;top:846.31px;font-size:38.1px;line-height:38.1px;color:#9dbdd1;font-weight:400;transform:scale(1.0610,1.0000);">Monitoring</div>
<div class=t style="left:170.40px;top:954.31px;font-size:38.1px;line-height:38.1px;color:#9dbdd1;font-weight:400;transform:scale(1.0485,1.0000);">Settings</div>
<div class=t style="left:2078.91px;top:36.44px;font-size:55.1px;line-height:55.1px;color:#222222;font-weight:400;transform:scale(1.0217,1.0000);">Policies</div>
<div class=t style="left:664.25px;top:253.69px;font-size:34.1px;line-height:34.1px;color:#0b5584;font-weight:400;transform:scale(0.9150,1.0000);">POLICIES</div>
<div class=t style="left:878.70px;top:253.69px;font-size:34.1px;line-height:34.1px;color:#616161;font-weight:400;transform:scale(0.9003,1.0000);">SECURITY PROFILES</div>
<div class=t style="left:1263.25px;top:253.69px;font-size:34.1px;line-height:34.1px;color:#616161;font-weight:400;transform:scale(0.9170,1.0000);">POLICY GROUPS</div>
<div class=t style="left:1591.24px;top:253.69px;font-size:34.1px;line-height:34.1px;color:#616161;font-weight:400;transform:scale(0.9184,1.0000);">POLICY GROUP LABELS</div>
<div class=t style="left:2025.25px;top:253.69px;font-size:34.1px;line-height:34.1px;color:#616161;font-weight:400;transform:scale(0.9178,1.0000);">POLICY SETS</div>
<div class=t style="left:840.96px;top:402.11px;font-size:33.6px;line-height:33.6px;color:#616161;font-weight:400;transform:scale(1.0131,1.0000);">Policy Set:</div>
<div class=t style="left:1076.25px;top:402.61px;font-size:33.6px;line-height:33.6px;color:#0b5584;font-weight:400;transform:scale(0.9838,1.0000);">IND CLINIC (363)</div>
<div class=t style="left:1449.95px;top:402.11px;font-size:33.6px;line-height:33.6px;color:#9a7a12;font-weight:400;transform:scale(1.0237,1.0000);">Score: 69.0</div>
<div class=t style="left:2905.93px;top:402.31px;font-size:33.6px;line-height:33.6px;color:#616161;font-weight:400;transform:scale(1.0239,1.0000);">Default Policy:</div>
<div class=t style="left:3166.00px;top:402.31px;font-size:33.6px;line-height:33.6px;color:#1e5e21;font-weight:400;transform:scale(1.0125,1.0000);">Allow</div>
<div class=t style="left:3415.08px;top:402.31px;font-size:33.6px;line-height:33.6px;color:#ffffff;font-weight:400;transform:scale(0.9189,1.0000);-webkit-text-stroke:0.6px #ffffff;">CREATE POLICY</div>
<div class=t style="left:661.03px;top:558.31px;font-size:33.6px;line-height:33.6px;color:#6a6a6a;font-weight:400;transform:scale(0.9853,1.0000);">Search</div>
<div class=t style="left:1232.00px;top:559.61px;font-size:33.6px;line-height:33.6px;color:#616161;font-weight:400;transform:scale(1.0127,1.0000);">View:</div>
<div class=t style="left:1356.19px;top:559.61px;font-size:33.6px;line-height:33.6px;color:#0b5584;font-weight:400;transform:scale(0.9375,1.0000);">DEFAULT VIEW</div>
<div class=t style="left:3016.30px;top:560.45px;font-size:32.6px;line-height:32.6px;color:#0b5584;font-weight:400;transform:scale(0.8995,1.0000);">MULTISELECT</div>
<div class=t style="left:3317.39px;top:560.45px;font-size:32.6px;line-height:32.6px;color:#0b5584;font-weight:400;transform:scale(0.8701,1.0000);">FILTERS</div>
<div class=t style="left:3531.18px;top:560.45px;font-size:32.6px;line-height:32.6px;color:#0b5584;font-weight:400;transform:scale(0.9408,1.0000);">FROM A-Z</div>
<div class=t style="left:845.02px;top:941.66px;font-size:29.4px;line-height:29.4px;color:#1f1f1f;font-weight:400;transform:scale(0.9835,1.0000);">Source</div>
<svg width='3840' height='1958' style='position:absolute;left:0;top:0;z-index:20;pointer-events:none'>
<path transform='translate(63.25 190.00) scale(2.25)' d='M19 5v2h-4V5h4M9 5v6H5V5h4m10 8v6h-4v-6h4M9 17v2H5v-2h4M21 3h-8v6h8V3zM11 3H3v10h8V3zm10 8h-8v10h8V11zm-10 4H3v6h8v-6z' fill='#9dbdd1' />
<path transform='translate(62.75 297.80) scale(2.25)' d='M3 6h18V4H3c-1.1 0-2 .9-2 2v12c0 1.1.9 2 2 2h4v-2H3V6zm10 6H9v1.78c-.61.55-1 1.33-1 2.22s.39 1.67 1 2.22V20h4v-1.78c.61-.55 1-1.34 1-2.22s-.39-1.67-1-2.22V12zm-2 5.5c-.83 0-1.5-.67-1.5-1.5s.67-1.5 1.5-1.5 1.5.67 1.5 1.5-.67 1.5-1.5 1.5zM22 8h-6c-.5 0-1 .5-1 1v10c0 .5.5 1 1 1h6c.5 0 1-.5 1-1V9c0-.5-.5-1-1-1zm-1 10h-4v-8h4v8z' fill='#9dbdd1' />
<path transform='translate(63.25 405.75) scale(2.25)' d='M12,1L3,5v6c0,5.55,3.84,10.74,9,12c5.16-1.26,9-6.45,9-12V5L12,1z M19,11c0,1.85-0.51,3.65-1.38,5.21l-1.45-1.45c1.29-1.94,1.07-4.58-0.64-6.29c-0.98-0.97-2.25-1.46-3.53-1.46c-1.28,0-2.55,0.49-3.53,1.46c-1.95,1.95-1.95,5.11,0,7.06c0.97,0.97,2.25,1.46,3.53,1.46c0.96,0,1.92-0.28,2.75-0.83l1.72,1.72c-1.19,1.42-2.73,2.51-4.47,3.04c-4.02-1.25-7-5.42-7-9.92V6.3l7-3.11l7,3.11V11z M12,15c-1.66,0-3-1.34-3-3s1.34-3,3-3s3,1.34,3,3S13.66,15,12,15z' fill='#ffffff' />
<g transform='translate(63.0 514.0) scale(2.25)' fill='none' stroke='#9dbdd1' stroke-width='1.95'><circle cx='12' cy='12.35' r='3.5'/><circle cx='12' cy='2.95' r='2.05'/><circle cx='2.95' cy='9.5' r='2.05'/><circle cx='21.05' cy='9.5' r='2.05'/><circle cx='5.95' cy='19.95' r='2.05'/><circle cx='17.95' cy='19.95' r='2.05'/><path d='M12 5V8.8M5 10.2L8.7 11.3M19 10.2L15.3 11.3M7.3 18.2L9.6 15.2M16.6 18.2L14.4 15.2'/></g>
<path transform='translate(61.40 620.40) scale(2.37)' d='M9 17H7v-7h2v7zm4 0h-2V7h2v10zm4 0h-2v-4h2v4zm2 2H5V5h14v14zm0-16H5c-1.1 0-2 .9-2 2v14c0 1.1.9 2 2 2h14c1.1 0 2-.9 2-2V5c0-1.1-.9-2-2-2z' fill='#9dbdd1' />
<path transform='translate(63.00 729.80) scale(2.25)' d='M12 2l-5.5 9h11L12 2zm0 3.84L13.93 9h-3.87L12 5.84zM17.5 13c-2.49 0-4.5 2.01-4.5 4.5s2.01 4.5 4.5 4.5 4.5-2.01 4.5-4.5-2.01-4.5-4.5-4.5zm0 7c-1.38 0-2.5-1.12-2.5-2.5s1.12-2.5 2.5-2.5 2.5 1.12 2.5 2.5-1.12 2.5-2.5 2.5zM3 21.5h8v-8H3v8zm2-6h4v4H5v-4z' fill='#9dbdd1' />
<path transform='translate(63.00 837.80) scale(2.25)' d='M21 3H3c-1.1 0-2 .9-2 2v12c0 1.1.9 2 2 2h5v2h8v-2h5c1.1 0 1.99-.9 1.99-2L23 5c0-1.1-.9-2-2-2zm0 14H3V5h18v12zm-2-9H8v2h11V8zm0 4H8v2h11v-2zM7 8H5v2h2V8zm0 4H5v2h2v-2z' fill='#9dbdd1' />
<path transform='translate(63.00 945.80) scale(2.25)' d='M19.43 12.98c.04-.32.07-.64.07-.98 0-.34-.03-.66-.07-.98l2.11-1.65c.19-.15.24-.42.12-.64l-2-3.46c-.09-.16-.26-.25-.44-.25-.06 0-.12.01-.17.03l-2.49 1c-.52-.4-1.08-.73-1.69-.98l-.38-2.65C14.46 2.18 14.25 2 14 2h-4c-.25 0-.46.18-.49.42l-.38 2.65c-.61.25-1.17.59-1.69.98l-2.49-1c-.06-.02-.12-.03-.18-.03-.17 0-.34.09-.43.25l-2 3.46c-.13.22-.07.49.12.64l2.11 1.65c-.04.32-.07.65-.07.98 0 .33.03.66.07.98l-2.11 1.65c-.19.15-.24.42-.12.64l2 3.46c.09.16.26.25.44.25.06 0 .12-.01.17-.03l2.49-1c.52.4 1.08.73 1.69.98l.38 2.65c.03.24.24.42.49.42h4c.25 0 .46-.18.49-.42l.38-2.65c.61-.25 1.17-.59 1.69-.98l2.49 1c.06.02.12.03.18.03.17 0 .34-.09.43-.25l2-3.46c.12-.22.07-.49-.12-.64l-2.11-1.65zm-1.98-1.71c.04.31.05.52.05.73 0 .21-.02.43-.05.73l-.14 1.13.89.7 1.08.84-.7 1.21-1.27-.51-1.04-.42-.9.68c-.43.32-.84.56-1.25.73l-1.06.43-.16 1.13-.2 1.35h-1.4l-.19-1.35-.16-1.13-1.06-.43c-.43-.18-.83-.41-1.23-.71l-.91-.7-1.06.43-1.27.51-.7-1.21 1.08-.84.89-.7-.14-1.13c-.03-.31-.05-.54-.05-.74s.02-.43.05-.73l.14-1.13-.89-.7-1.08-.84.7-1.21 1.27.51 1.04.42.9-.68c.43-.32.84-.56 1.25-.73l1.06-.43.16-1.13.2-1.35h1.39l.19 1.35.16 1.13 1.06.43c.43.18.83.41 1.23.71l.91.7 1.06-.43 1.27-.51.7 1.21-1.07.85-.89.7.14 1.13zM12 8c-2.21 0-4 1.79-4 4s1.79 4 4 4 4-1.79 4-4-1.79-4-4-4zm0 6c-1.1 0-2-.9-2-2s.9-2 2-2 2 .9 2 2-.9 2-2 2z' fill='#9dbdd1' />
<path transform='translate(448.00 45.80) scale(2.25)' d='M15.41 7.41L14 6l-6 6 6 6 1.41-1.41L10.83 12z' fill='#9cbbcf' />
<g transform='translate(612 37) scale(1.0)' fill='#000000' stroke='#000000' stroke-linejoin='round' stroke-width='1.3'><path d='M34.4 1.0 Q36.5 3 36.5 6.3 L36.5 12.7 Q34.6 11.6 32.2 11.9 L9.3 25.0 Q5.5 26.2 3.6 25.4 Q0.3 23 0.3 19.7 Q1.8 16.5 4.0 15.4 L29.6 0.5 Q32.5 -0.2 34.4 1.0 Z'/><path d='M34.4 52.7 Q36.5 50.7 36.5 47.4 L36.5 41.0 Q34.6 42.1 32.2 41.8 L9.3 28.7 Q5.5 27.5 3.6 28.3 Q0.3 30.7 0.3 34.0 Q1.8 37.2 4.0 38.3 L29.6 53.2 Q32.5 53.9 34.4 52.7 Z'/><path d='M19.2 26.6 L28.8 21.4 Q30.5 21.8 30.6 23.5 L30.6 30.9 Q30 32.4 28.3 32.1 Z'/></g>
<g transform='translate(71.8 1806) scale(1.0)' fill='#9ba8b1' stroke='#9ba8b1' stroke-linejoin='round' stroke-width='1.3'><path d='M34.4 1.0 Q36.5 3 36.5 6.3 L36.5 12.7 Q34.6 11.6 32.2 11.9 L9.3 25.0 Q5.5 26.2 3.6 25.4 Q0.3 23 0.3 19.7 Q1.8 16.5 4.0 15.4 L29.6 0.5 Q32.5 -0.2 34.4 1.0 Z'/><path d='M34.4 52.7 Q36.5 50.7 36.5 47.4 L36.5 41.0 Q34.6 42.1 32.2 41.8 L9.3 28.7 Q5.5 27.5 3.6 28.3 Q0.3 30.7 0.3 34.0 Q1.8 37.2 4.0 38.3 L29.6 53.2 Q32.5 53.9 34.4 52.7 Z'/><path d='M19.2 26.6 L28.8 21.4 Q30.5 21.8 30.6 23.5 L30.6 30.9 Q30 32.4 28.3 32.1 Z'/></g>
<path transform='translate(3426.60 36.80) scale(2.21)' d='M11 23.59v-3.6c-5.01-.26-9-4.42-9-9.49C2 5.26 6.26 1 11.5 1S21 5.26 21 10.5c0 4.95-3.44 9.93-8.57 12.4l-1.43.69zM11.5 3C7.36 3 4 6.36 4 10.5S7.36 18 11.5 18H13v2.3c3.64-2.3 6-6.08 6-9.8C19 6.36 15.64 3 11.5 3zm-1 11.5h2v2h-2zm2-1.5h-2c0-3.25 3-3 3-5 0-1.1-.9-2-2-2s-2 .9-2 2h-2c0-2.21 1.79-4 4-4s4 1.79 4 4c0 2.5-3 2.75-3 5z' fill='#666666' />
<path transform='translate(3534.00 37.40) scale(2.23)' d='M12 22c1.1 0 2-.9 2-2h-4c0 1.1.89 2 2 2zm6-6v-5c0-3.07-1.64-5.64-4.5-6.32V4c0-.83-.67-1.5-1.5-1.5s-1.5.67-1.5 1.5v.68C7.63 5.36 6 7.92 6 11v5l-2 2v1h16v-1l-2-2zm-2 1H8v-6c0-2.48 1.51-4.5 4-4.5s4 2.02 4 4.5v6z' fill='#666666' />
<circle cx='3580' cy='45' r='9' fill='#05548a'/>
<circle cx='3682.5' cy='64' r='40.5' fill='#e9f0f3'/>
<path transform='translate(3654.60 36.80) scale(2.27)' d='M12 12c2.21 0 4-1.79 4-4s-1.79-4-4-4-4 1.79-4 4 1.79 4 4 4zm0 2c-2.67 0-8 1.34-8 4v2h16v-2c0-2.66-5.33-4-8-4z' fill='#959b9c' />
<rect x='655' y='399' width='40' height='4' fill='#0b5584'/>
<rect x='655' y='408' width='27' height='4' fill='#0b5584'/>
<rect x='655' y='417' width='40' height='4' fill='#0b5584'/>
<rect x='655' y='426' width='27' height='4' fill='#0b5584'/>
<rect x='655' y='435' width='40' height='4' fill='#0b5584'/>
<rect x='739.1' y='396' width='45.4' height='45.8' rx='6' fill='#fff'/>
<rect x='744' y='401' width='9' height='9' fill='#065689'/>
<rect x='744' y='414.4' width='9' height='9' fill='#065689'/>
<rect x='744' y='427.8' width='9' height='9' fill='#065689'/>
<rect x='757.5' y='401' width='9' height='9' fill='#065689'/>
<rect x='757.5' y='414.4' width='9' height='9' fill='#065689'/>
<rect x='757.5' y='427.8' width='9' height='9' fill='#065689'/>
<rect x='771' y='401' width='9' height='9' fill='#065689'/>
<rect x='771' y='414.4' width='9' height='9' fill='#065689'/>
<rect x='771' y='427.8' width='9' height='9' fill='#065689'/>
<circle cx='1048' cy='419' r='9.3' fill='#9e9e9e'/>
<path transform='translate(1356.30 397.50) scale(1.83)' d='M16.59 8.59L12 13.17 7.41 8.59 6 10l6 6 6-6z' fill='#0b5584' />
<path transform='translate(1603.00 554.30) scale(1.83)' d='M16.59 8.59L12 13.17 7.41 8.59 6 10l6 6 6-6z' fill='#0b5584' />
<path transform='translate(1109.30 551.00) scale(2.22)' d='M15.5 14h-.79l-.28-.27C15.41 12.59 16 11.11 16 9.5 16 5.91 13.09 3 9.5 3S3 5.91 3 9.5 5.91 16 9.5 16c1.61 0 3.09-.59 4.23-1.57l.27.28v.79l5 4.99L20.49 19l-4.99-5zm-6 0C7.01 14 5 11.99 5 9.5S7.01 5 9.5 5 14 7.01 14 9.5 11.99 14 9.5 14z' fill='#6b6b6b' />
<path transform='translate(3255.40 554.00) scale(1.87)' d='M10 18h4v-2h-4v2zM3 6v2h18V6H3zm3 7h12v-2H6v2z' fill='#0b5584' />
<path transform='translate(3469.90 554.00) scale(1.87)' d='M3 18h6v-2H3v2zM3 6v2h18V6H3zm0 7h12v-2H3v2z' fill='#0b5584' />
<path transform='translate(3351.40 395.80) scale(1.93)' d='M19 13h-6v6h-2v-6H5v-2h6V5h2v6h6v2z' fill='#ffffff' />
<defs><filter id='ash' x='-20%' y='-20%' width='140%' height='140%'><feDropShadow dx='0' dy='2' stdDeviation='2' flood-color='#000' flood-opacity='0.3'/></filter></defs>
<polygon filter='url(#ash)' points='3207.8,273.6 3217.5,263.2 3282.6,325.7 3292.5,315.3 3309.3,362.1 3262,347.5 3271.7,337.1' fill='#1a9af1'/>
<path transform='translate(3615.00 1112.00) scale(2.25)' d='M17.65 6.35C16.2 4.9 14.21 4 12 4c-4.42 0-7.99 3.58-7.99 8s3.57 8 7.99 8c3.73 0 6.84-2.55 7.73-6h-2.08c-.82 2.33-3.04 4-5.65 4-3.31 0-6-2.69-6-6s2.69-6 6-6c1.66 0 3.14.69 4.22 1.78L13 11h7V4l-2.35 2.35z' fill='#6f6f6f' />
<path transform='translate(3617.40 1240.50) scale(2.05)' d='M9.01 14H2v2h7.01v3L13 15l-3.99-4v3zm5.98-1v-3H22V8h-7.01V5L11 9l3.99 4z' fill='#6f6f6f' />
<path transform='translate(3614.40 1363.60) scale(2.3)' d='M12.75 3h-1.5L6.5 14h2.1l.9-2.2h5l.9 2.2h2.1L12.75 3zm-2.62 7L12 4.98 13.87 10h-3.74zm10.37 8l-3-3v2H5v2h12.5v2l3-3z' fill='#6f6f6f' />
<path transform='translate(3615.00 1490.30) scale(2.25)' d='M12 2c1.1 0 2 .9 2 2s-.9 2-2 2-2-.9-2-2 .9-2 2-2zm9 7h-6v13h-2v-6h-2v6H9V9H3V7h18v2z' fill='#6f6f6f' />
<path d='M3626.8 1640.90 A12 12 0 1 1 3644.4 1648.20' fill='none' stroke='#6f6f6f' stroke-width='4.4'/>
<path d='M3649 1649.60 L3660 1660.50' stroke='#6f6f6f' stroke-width='4.6' stroke-linecap='round'/>
<g transform='translate(3632.5 1651.30)' fill='#6f6f6f'><circle r='6.4'/><rect x='-2.3' y='-8.4' width='4.6' height='4' rx='0.6' transform='rotate(0)'/><rect x='-2.3' y='-8.4' width='4.6' height='4' rx='0.6' transform='rotate(60)'/><rect x='-2.3' y='-8.4' width='4.6' height='4' rx='0.6' transform='rotate(120)'/><rect x='-2.3' y='-8.4' width='4.6' height='4' rx='0.6' transform='rotate(180)'/><rect x='-2.3' y='-8.4' width='4.6' height='4' rx='0.6' transform='rotate(240)'/><rect x='-2.3' y='-8.4' width='4.6' height='4' rx='0.6' transform='rotate(300)'/><circle r='2.5' fill='#fff'/></g>
<path transform='translate(3615.00 1742.50) scale(2.25)' d='M11 7h2v2h-2zm0 4h2v6h-2zm1-9C6.48 2 2 6.48 2 12s4.48 10 10 10 10-4.48 10-10S17.52 2 12 2zm0 18c-4.41 0-8-3.59-8-8s3.59-8 8-8 8 3.59 8 8-3.59 8-8 8z' fill='#6f6f6f' />
</svg>
</body></html>
